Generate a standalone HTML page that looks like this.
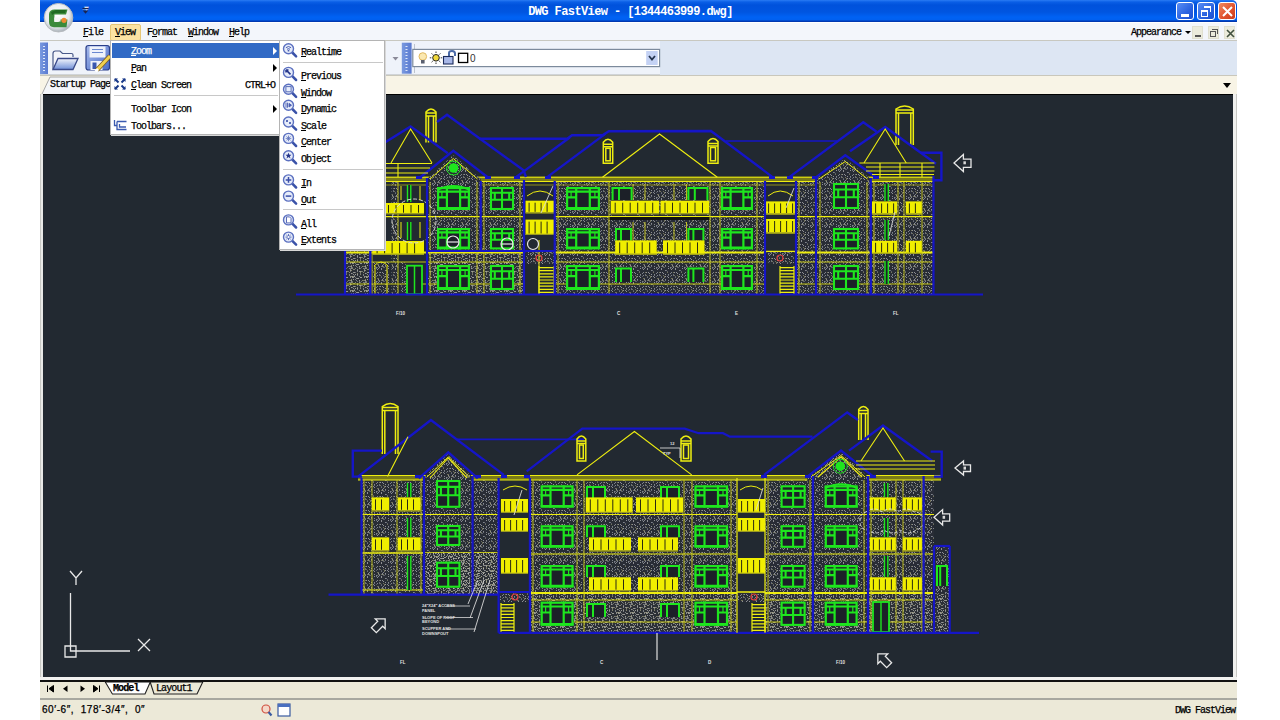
<!DOCTYPE html>
<html><head><meta charset="utf-8">
<style>
*{margin:0;padding:0;box-sizing:border-box}
html,body{width:1280px;height:720px;overflow:hidden;background:#fff;font-family:"Liberation Mono",monospace;position:relative}
.abs{position:absolute}
#title{left:40px;top:0;width:1197px;height:22px;background:linear-gradient(#2a7cf4 0px,#0a5fe6 2px,#0052dc 5px,#0055e0 12px,#0062f4 17px,#0060f0 20px,#0038b0 21px,#0038b0 22px);border-radius:0 5px 0 0}
#title .t{left:0;width:100%;top:5px;text-align:center;color:#fff;font-weight:bold;font-size:12px;letter-spacing:-0.6px;padding-right:16px;line-height:14px}
.tbtn{position:absolute;top:2px;width:18px;height:18px;border:1px solid #fff;border-radius:3px;background:linear-gradient(135deg,#5a8ef5,#2a62e0 60%,#1d4fd0)}
#menubar{left:40px;top:22px;width:1197px;height:19px;background:#f3f6fb;border-top:1px solid #fff;border-bottom:1px solid #c8c8c0}
.mi{position:absolute;top:4px;font-size:10px;letter-spacing:-1px;color:#000;line-height:12px;-webkit-text-stroke:0.25px #000}
u{text-decoration:underline}
#toolbar{left:40px;top:41px;width:1197px;height:34px;background:#dde6f3}
#tb1{left:0;top:0px;width:620px;height:34px;background:#eff3fa;border-bottom:1px solid #d0d4d8}
#tabrow{left:40px;top:75px;width:1197px;height:19px;background:#f8f4e6;border-top:1px solid #c9c7bb}
#canvas{left:43px;top:94px;width:1190px;height:583px;background:#222931;border-top:1px solid #000;overflow:hidden}
#rb{left:1233px;top:94px;width:4px;height:586px;background:#f0f0ee;border-right:1px solid #c8c8c4}
#lb{left:40px;top:94px;width:3px;height:586px;background:#e8e8e6;border-left:1px solid #c8c8c4}
#cbot{left:40px;top:677px;width:1197px;height:4px;background:#f2f2f0}
#tabbar{left:40px;top:680px;width:1197px;height:20px;background:#ece9d8;border-top:2px solid #111;border-bottom:2px solid #a8a8a0}
#status{left:40px;top:700px;width:1197px;height:20px;background:#ece9d8}
.menu{background:#fff;border:1px solid #b4b4b4;box-shadow:1px 1px 0 #d8d8d8}
.row{position:absolute;font-size:10px;letter-spacing:-1px;color:#000;line-height:12px;-webkit-text-stroke:0.25px currentColor}
.sep{position:absolute;height:2px;background:#c8c8c8;border-bottom:1px solid #fff}
.menu .row{margin-top:1px}
.arr{position:absolute;width:0;height:0;border-top:4px solid transparent;border-bottom:4px solid transparent;border-left:4px solid #000}
</style></head><body>
<!-- title bar -->
<div id="title" class="abs">
  <div class="abs t">DWG FastView - [1344463999.dwg]</div>
  <div class="tbtn" style="left:1136px"><div class="abs" style="left:4px;top:11px;width:8px;height:3px;background:#fff"></div></div>
  <div class="tbtn" style="left:1157px"><div class="abs" style="left:3px;top:7px;width:7px;height:7px;border:1px solid #fff;border-top-width:2px"></div><div class="abs" style="left:6px;top:3px;width:7px;height:6px;border-top:2px solid #fff;border-right:1px solid #fff"></div></div>
  <div class="tbtn" style="left:1178px;background:linear-gradient(135deg,#f08a60,#e0502a 60%,#c83c1c)"><svg class="abs" style="left:3px;top:3px" width="11" height="11"><path d="M1 1L10 10M10 1L1 10" stroke="#fff" stroke-width="2"/></svg></div>
  <div class="abs" style="left:44px;top:4px;color:#fff;font-size:8px">&#9660;</div>
</div>
<!-- menubar -->
<div id="menubar" class="abs">
  <div class="abs" style="left:70px;top:1px;width:31px;height:17px;background:#fbe2a2;border:1px solid #e6c676;border-radius:2px"></div>
  <div class="mi" style="left:43px"><u>F</u>ile</div>
  <div class="mi" style="left:75px"><u>V</u>iew</div>
  <div class="mi" style="left:107px">F<u>o</u>rmat</div>
  <div class="mi" style="left:148px"><u>W</u>indow</div>
  <div class="mi" style="left:189px"><u>H</u>elp</div>
  <div class="mi" style="left:1091px">Appearance</div>
  <div class="abs" style="left:1145px;top:8px;width:0;height:0;border-left:3px solid transparent;border-right:3px solid transparent;border-top:3px solid #000"></div>
  <div class="abs" style="left:1152px;top:3px;width:11px;height:13px;background:#ebebdc;border:1px solid #e0e0d0"><div class="abs" style="left:2px;top:8px;width:6px;height:2px;background:#555"></div></div>
  <div class="abs" style="left:1168px;top:3px;width:11px;height:13px;background:#ebebdc;border:1px solid #e0e0d0"><div class="abs" style="left:1px;top:4px;width:6px;height:6px;border:1px solid #555"></div><div class="abs" style="left:3px;top:2px;width:6px;height:5px;border-top:1px solid #555;border-right:1px solid #555"></div></div>
  <div class="abs" style="left:1184px;top:3px;width:11px;height:13px;background:#ebebdc;border:1px solid #e0e0d0"><svg class="abs" style="left:1px;top:2px" width="9" height="9"><path d="M1 1L8 8M8 1L1 8" stroke="#405040" stroke-width="1.6"/></svg></div>
</div>
<!-- toolbar -->
<div id="toolbar" class="abs">
  <div id="tb1" class="abs"></div>
</div>
<!-- tab row -->
<div id="tabrow" class="abs">
  <svg class="abs" style="left:0;top:0" width="90" height="19"><path d="M2 18L10 1H88V18" fill="#f4f6f9" stroke="#a8a8a8" stroke-width="1"/></svg>
  <div class="row" style="left:10px;top:3px">Startup Page</div>
  <div class="abs" style="left:1183px;top:7px;width:0;height:0;border-left:4px solid transparent;border-right:4px solid transparent;border-top:5px solid #000"></div>
</div>
<div id="lb" class="abs"></div>
<div id="rb" class="abs"></div>
<div id="canvas" class="abs"></div>
<svg class="abs" style="left:0;top:0" width="1280" height="720" viewBox="0 0 1280 720" shape-rendering="auto">
<defs>
<pattern id="st" width="14" height="14" patternUnits="userSpaceOnUse"><rect width="14" height="14" fill="#282c35"/><rect x="7" y="13" width="1" height="1" fill="#8e9094"/><rect x="13" y="12" width="1" height="1" fill="#70705a"/><rect x="7" y="8" width="1" height="1" fill="#8e9094"/><rect x="3" y="2" width="1" height="1" fill="#8e9094"/><rect x="7" y="10" width="1" height="1" fill="#8e9094"/><rect x="12" y="2" width="1" height="1" fill="#6a6f78"/><rect x="7" y="4" width="1" height="1" fill="#80848c"/><rect x="1" y="8" width="1" height="1" fill="#6a6f78"/><rect x="9" y="6" width="1" height="1" fill="#70705a"/><rect x="10" y="11" width="1" height="1" fill="#8e9094"/><rect x="10" y="2" width="1" height="1" fill="#8e9094"/><rect x="0" y="13" width="1" height="1" fill="#8e9094"/><rect x="1" y="0" width="1" height="1" fill="#6a6f78"/><rect x="3" y="3" width="1" height="1" fill="#8e9094"/><rect x="0" y="12" width="1" height="1" fill="#70705a"/><rect x="5" y="7" width="1" height="1" fill="#8e9094"/><rect x="13" y="3" width="1" height="1" fill="#8e9094"/><rect x="3" y="10" width="1" height="1" fill="#5a5e66"/><rect x="7" y="0" width="1" height="1" fill="#6a6f78"/><rect x="4" y="6" width="1" height="1" fill="#8e9094"/><rect x="13" y="1" width="1" height="1" fill="#5a5e66"/><rect x="5" y="12" width="1" height="1" fill="#80848c"/><rect x="8" y="4" width="1" height="1" fill="#6a6f78"/><rect x="1" y="9" width="1" height="1" fill="#6a6f78"/><rect x="6" y="1" width="1" height="1" fill="#5a5e66"/><rect x="10" y="0" width="1" height="1" fill="#80848c"/><rect x="3" y="0" width="1" height="1" fill="#70705a"/><rect x="6" y="11" width="1" height="1" fill="#70705a"/><rect x="9" y="10" width="1" height="1" fill="#80848c"/><rect x="12" y="10" width="1" height="1" fill="#5a5e66"/><rect x="5" y="1" width="1" height="1" fill="#5a5e66"/><rect x="5" y="0" width="1" height="1" fill="#70705a"/><rect x="12" y="1" width="1" height="1" fill="#80848c"/><rect x="3" y="11" width="1" height="1" fill="#6a6f78"/><rect x="0" y="0" width="1" height="1" fill="#70705a"/><rect x="12" y="7" width="1" height="1" fill="#80848c"/><rect x="10" y="8" width="1" height="1" fill="#80848c"/><rect x="6" y="10" width="1" height="1" fill="#70705a"/><rect x="1" y="6" width="1" height="1" fill="#70705a"/><rect x="4" y="13" width="1" height="1" fill="#8e9094"/><rect x="4" y="0" width="1" height="1" fill="#80848c"/><rect x="2" y="6" width="1" height="1" fill="#8e9094"/><rect x="10" y="9" width="1" height="1" fill="#6a6f78"/><rect x="0" y="2" width="1" height="1" fill="#80848c"/><rect x="9" y="5" width="1" height="1" fill="#5a5e66"/><rect x="1" y="1" width="1" height="1" fill="#80848c"/><rect x="5" y="9" width="1" height="1" fill="#70705a"/><rect x="2" y="9" width="1" height="1" fill="#70705a"/><rect x="13" y="9" width="1" height="1" fill="#80848c"/><rect x="13" y="6" width="1" height="1" fill="#80848c"/></pattern>
<pattern id="st2" width="14" height="14" patternUnits="userSpaceOnUse"><rect width="14" height="14" fill="#2c3036"/><rect x="10" y="2" width="1" height="1" fill="#6a6e70"/><rect x="3" y="13" width="1" height="1" fill="#9a9a96"/><rect x="3" y="11" width="1" height="1" fill="#8a8c8a"/><rect x="2" y="11" width="1" height="1" fill="#9a9a96"/><rect x="3" y="10" width="1" height="1" fill="#84846a"/><rect x="7" y="9" width="1" height="1" fill="#7a7e84"/><rect x="6" y="0" width="1" height="1" fill="#7a7e84"/><rect x="1" y="0" width="1" height="1" fill="#9a9a96"/><rect x="4" y="3" width="1" height="1" fill="#84846a"/><rect x="4" y="6" width="1" height="1" fill="#9a9a96"/><rect x="7" y="4" width="1" height="1" fill="#9a9a96"/><rect x="1" y="2" width="1" height="1" fill="#8a8c8a"/><rect x="7" y="8" width="1" height="1" fill="#9a9a96"/><rect x="9" y="1" width="1" height="1" fill="#6a6e70"/><rect x="3" y="3" width="1" height="1" fill="#7a7e84"/><rect x="1" y="4" width="1" height="1" fill="#84846a"/><rect x="7" y="3" width="1" height="1" fill="#7a7e84"/><rect x="0" y="2" width="1" height="1" fill="#6a6e70"/><rect x="5" y="8" width="1" height="1" fill="#9a9a96"/><rect x="2" y="1" width="1" height="1" fill="#6a6e70"/><rect x="2" y="7" width="1" height="1" fill="#6a6e70"/><rect x="10" y="11" width="1" height="1" fill="#9a9a96"/><rect x="9" y="2" width="1" height="1" fill="#9a9a96"/><rect x="0" y="0" width="1" height="1" fill="#84846a"/><rect x="5" y="11" width="1" height="1" fill="#6a6e70"/><rect x="9" y="10" width="1" height="1" fill="#7a7e84"/><rect x="7" y="1" width="1" height="1" fill="#6a6e70"/><rect x="5" y="2" width="1" height="1" fill="#7a7e84"/><rect x="1" y="7" width="1" height="1" fill="#9a9a96"/><rect x="0" y="11" width="1" height="1" fill="#8a8c8a"/><rect x="12" y="5" width="1" height="1" fill="#6a6e70"/><rect x="1" y="10" width="1" height="1" fill="#84846a"/><rect x="1" y="13" width="1" height="1" fill="#84846a"/><rect x="12" y="0" width="1" height="1" fill="#84846a"/><rect x="9" y="0" width="1" height="1" fill="#9a9a96"/><rect x="10" y="6" width="1" height="1" fill="#84846a"/><rect x="1" y="1" width="1" height="1" fill="#7a7e84"/><rect x="11" y="5" width="1" height="1" fill="#84846a"/><rect x="11" y="11" width="1" height="1" fill="#9a9a96"/><rect x="7" y="7" width="1" height="1" fill="#84846a"/><rect x="13" y="8" width="1" height="1" fill="#7a7e84"/><rect x="8" y="12" width="1" height="1" fill="#9a9a96"/><rect x="0" y="4" width="1" height="1" fill="#9a9a96"/><rect x="0" y="3" width="1" height="1" fill="#7a7e84"/><rect x="7" y="12" width="1" height="1" fill="#9a9a96"/><rect x="10" y="7" width="1" height="1" fill="#6a6e70"/><rect x="0" y="5" width="1" height="1" fill="#6a6e70"/><rect x="2" y="10" width="1" height="1" fill="#9a9a96"/><rect x="3" y="8" width="1" height="1" fill="#8a8c8a"/><rect x="5" y="6" width="1" height="1" fill="#6a6e70"/><rect x="6" y="12" width="1" height="1" fill="#8a8c8a"/><rect x="3" y="6" width="1" height="1" fill="#8a8c8a"/><rect x="9" y="5" width="1" height="1" fill="#8a8c8a"/><rect x="2" y="2" width="1" height="1" fill="#84846a"/><rect x="5" y="13" width="1" height="1" fill="#7a7e84"/><rect x="11" y="1" width="1" height="1" fill="#6a6e70"/><rect x="13" y="2" width="1" height="1" fill="#7a7e84"/><rect x="13" y="6" width="1" height="1" fill="#84846a"/><rect x="10" y="8" width="1" height="1" fill="#84846a"/><rect x="10" y="5" width="1" height="1" fill="#9a9a96"/><rect x="7" y="5" width="1" height="1" fill="#7a7e84"/><rect x="13" y="0" width="1" height="1" fill="#6a6e70"/><rect x="13" y="9" width="1" height="1" fill="#7a7e84"/><rect x="4" y="9" width="1" height="1" fill="#6a6e70"/><rect x="4" y="10" width="1" height="1" fill="#9a9a96"/><rect x="0" y="10" width="1" height="1" fill="#8a8c8a"/></pattern>
<pattern id="st3" width="5" height="5" patternUnits="userSpaceOnUse"><rect x="1" y="1" width="1" height="1" fill="#a0a090"/><rect x="3" y="3" width="1" height="1" fill="#b8b8b0"/><rect x="4" y="0" width="1" height="1" fill="#909090"/></pattern>
</defs>
<g>
<rect x="345" y="180" width="25" height="114.5" fill="url(#st)" stroke="none" stroke-width="1"/>
<rect x="427" y="180" width="97" height="114.5" fill="url(#st)" stroke="none" stroke-width="1"/>
<rect x="391.5" y="180" width="7" height="114.5" fill="url(#st)" stroke="none" stroke-width="1"/>
<rect x="372" y="262" width="18" height="32" fill="url(#st)" stroke="none" stroke-width="1"/>
<rect x="400" y="262" width="6" height="32" fill="url(#st)" stroke="none" stroke-width="1"/>
<rect x="345" y="252" width="25" height="42.5" fill="url(#st2)" stroke="none" stroke-width="1"/>
<rect x="427" y="252" width="97" height="42.5" fill="url(#st2)" stroke="none" stroke-width="1"/>
<rect x="555" y="252" width="210" height="42.5" fill="url(#st2)" stroke="none" stroke-width="1"/>
<rect x="795" y="252" width="139" height="42.5" fill="url(#st2)" stroke="none" stroke-width="1"/>
<rect x="555" y="180" width="210" height="114.5" fill="url(#st)" stroke="none" stroke-width="1"/>
<rect x="795" y="178" width="139" height="116.5" fill="url(#st)" stroke="none" stroke-width="1"/>
<rect x="524" y="182" width="31" height="112.5" fill="#222931" stroke="none" stroke-width="1"/>
<rect x="765" y="182" width="30" height="112.5" fill="#222931" stroke="none" stroke-width="1"/>
<path d="M527 196 Q540 186 553 196" stroke="#eeee10" stroke-width="1" fill="none"/>
<path d="M768 196 Q780 186 793 196" stroke="#eeee10" stroke-width="1" fill="none"/>
<rect x="525.5" y="200.7" width="28.5" height="12.6" fill="#f0ee00" stroke="none" stroke-width="1"/>
<path d="M529.1 202.7V211.8M535.1 202.7V211.8M541.1 202.7V211.8M547.1 202.7V211.8" stroke="#2a2a10" stroke-width="1"/>
<rect x="525.5" y="212.1" width="28.5" height="1.2" fill="#9a9a20" stroke="none" stroke-width="1"/>
<rect x="525.5" y="219.6" width="28.5" height="15.4" fill="#f0ee00" stroke="none" stroke-width="1"/>
<path d="M529.1 221.6V233.5M535.1 221.6V233.5M541.1 221.6V233.5M547.1 221.6V233.5" stroke="#2a2a10" stroke-width="1"/>
<rect x="525.5" y="233.8" width="28.5" height="1.2" fill="#9a9a20" stroke="none" stroke-width="1"/>
<path d="M524 251.5H555" stroke="#1515c8" stroke-width="2"/>
<rect x="526" y="252" width="28" height="12" fill="url(#st)" stroke="none" stroke-width="1"/>
<path d="M539 267.6H554M539 270.7H554M539 273.8H554M539 276.9H554M539 280H554M539 283.1H554M539 286.2H554M539 289.3H554M539 292.4H554" stroke="#eeee10" stroke-width="1.2"/>
<path d="M539 266V294 M554 266V294" stroke="#eeee10" stroke-width="1.2"/>
<path d="M539 240V294" stroke="#eeee10" stroke-width="1"/>
<rect x="765" y="201.4" width="30" height="13.1" fill="#f0ee00" stroke="none" stroke-width="1"/>
<path d="M768.6 203.4V213M774.6 203.4V213M780.6 203.4V213M786.6 203.4V213M792.6 203.4V213" stroke="#2a2a10" stroke-width="1"/>
<rect x="765" y="213.3" width="30" height="1.2" fill="#9a9a20" stroke="none" stroke-width="1"/>
<rect x="765" y="219" width="30" height="14.5" fill="#f0ee00" stroke="none" stroke-width="1"/>
<path d="M768.6 221V232M774.6 221V232M780.6 221V232M786.6 221V232M792.6 221V232" stroke="#2a2a10" stroke-width="1"/>
<rect x="765" y="232.3" width="30" height="1.2" fill="#9a9a20" stroke="none" stroke-width="1"/>
<path d="M765 251.5H795" stroke="#eeee10" stroke-width="1.5"/>
<rect x="767" y="252" width="27" height="12" fill="url(#st)" stroke="none" stroke-width="1"/>
<path d="M780 267.6H794M780 270.7H794M780 273.8H794M780 276.9H794M780 280H794M780 283.1H794M780 286.2H794M780 289.3H794M780 292.4H794" stroke="#eeee10" stroke-width="1.2"/>
<path d="M780 266V294 M794 266V294" stroke="#eeee10" stroke-width="1.2"/>
<circle cx="539" cy="258" r="3" fill="none" stroke="#e04040" stroke-width="1.2"/>
<circle cx="780" cy="258" r="3" fill="none" stroke="#e04040" stroke-width="1.2"/>
<path d="M345 216.6H524" stroke="#eeee10" stroke-width="1.2"/>
<path d="M345 252.5H524" stroke="#eeee10" stroke-width="2.2"/>
<path d="M345 262H524" stroke="#eeee10" stroke-width="0.8"/>
<path d="M345 284H524" stroke="#eeee10" stroke-width="0.8"/>
<path d="M555 216.6H765" stroke="#eeee10" stroke-width="1.2"/>
<path d="M555 252.5H765" stroke="#eeee10" stroke-width="2.2"/>
<path d="M555 262H765" stroke="#eeee10" stroke-width="0.8"/>
<path d="M555 284H765" stroke="#eeee10" stroke-width="0.8"/>
<path d="M795 216.6H934" stroke="#eeee10" stroke-width="1.2"/>
<path d="M795 252.5H934" stroke="#eeee10" stroke-width="2.2"/>
<path d="M795 262H934" stroke="#eeee10" stroke-width="0.8"/>
<path d="M795 284H934" stroke="#eeee10" stroke-width="0.8"/>
<path d="M609 218.5H710" stroke="#111" stroke-width="3"/>
<rect x="345" y="176.6" width="589" height="5.4" fill="#7a7a18" stroke="none" stroke-width="1"/>
<path d="M345 177.2H934" stroke="#eeee10" stroke-width="1.1"/>
<path d="M345 181.5H934" stroke="#eeee10" stroke-width="1.1"/>
<path d="M345 185H934" stroke="#a8a818" stroke-width="0.8"/>
<path d="M427 186 L427 179 L453.3 155 L480.7 179 L480.7 186Z" fill="url(#st)" stroke="none" stroke-width="1"/>
<path d="M816 186 L816 179 L845.3 158.5 L870.8 179 L870.8 186Z" fill="url(#st)" stroke="none" stroke-width="1"/>
<path d="M430 179 L453.3 158.5 L477.5 179 M819 179 L845.3 161.5 L867.5 179" stroke="#eeee10" stroke-width="1" fill="none"/>
<path d="M372 182V294.5" stroke="#c8c818" stroke-width="0.9"/>
<path d="M398 182V294.5" stroke="#c8c818" stroke-width="0.9"/>
<path d="M430 182V294.5" stroke="#c8c818" stroke-width="0.9"/>
<path d="M477 182V294.5" stroke="#c8c818" stroke-width="0.9"/>
<path d="M484 182V294.5" stroke="#c8c818" stroke-width="0.9"/>
<path d="M520 182V294.5" stroke="#c8c818" stroke-width="0.9"/>
<path d="M558 182V294.5" stroke="#c8c818" stroke-width="0.9"/>
<path d="M609 182V294.5" stroke="#c8c818" stroke-width="0.9"/>
<path d="M710 182V294.5" stroke="#c8c818" stroke-width="0.9"/>
<path d="M720 182V294.5" stroke="#c8c818" stroke-width="0.9"/>
<path d="M757 182V294.5" stroke="#c8c818" stroke-width="0.9"/>
<path d="M799 182V294.5" stroke="#c8c818" stroke-width="0.9"/>
<path d="M820 182V294.5" stroke="#c8c818" stroke-width="0.9"/>
<path d="M867 182V294.5" stroke="#c8c818" stroke-width="0.9"/>
<path d="M874 182V294.5" stroke="#c8c818" stroke-width="0.9"/>
<path d="M898 182V294.5" stroke="#c8c818" stroke-width="0.9"/>
<path d="M904 182V294.5" stroke="#c8c818" stroke-width="0.9"/>
<path d="M922 182V294.5" stroke="#c8c818" stroke-width="0.9"/>
<path d="M633 184V200" stroke="#c8c818" stroke-width="0.9"/>
<path d="M633 222V240" stroke="#c8c818" stroke-width="0.9"/>
<path d="M645 184V200" stroke="#c8c818" stroke-width="0.9"/>
<path d="M645 222V240" stroke="#c8c818" stroke-width="0.9"/>
<path d="M674 184V200" stroke="#c8c818" stroke-width="0.9"/>
<path d="M674 222V240" stroke="#c8c818" stroke-width="0.9"/>
<path d="M686.5 184V200" stroke="#c8c818" stroke-width="0.9"/>
<path d="M686.5 222V240" stroke="#c8c818" stroke-width="0.9"/>
<rect x="437" y="187" width="33" height="23" fill="#1c2028" stroke="none" stroke-width="1"/>
<g stroke="#1ee61e" stroke-width="2.2" fill="none">
<rect x="438.1" y="188.1" width="30.8" height="20.8"/>
<path d="M446.9 187V210 M460.1 187V210 M437 191.6H470 M437 208.2H470 M437 197.3H446.9 M460.1 197.3H470"/>
<path d="M441.9 191.6V197.3 M465.1 191.6V197.3" stroke-width="1.2"/>
<path d="M437 190 Q453.5 182 470 190" stroke-width="2"/>
</g>
<rect x="490" y="187" width="24" height="23" fill="#1c2028" stroke="none" stroke-width="1"/>
<g stroke="#1ee61e" stroke-width="2.1" fill="none">
<rect x="491" y="188" width="22" height="21"/>
<path d="M502 187V210 M490 192.8H514 M490 199.7H514 M494.8 192.8V199.7 M509.2 192.8V199.7"/>
</g>
<rect x="566" y="187" width="34" height="23" fill="#1c2028" stroke="none" stroke-width="1"/>
<g stroke="#1ee61e" stroke-width="2.2" fill="none">
<rect x="567.1" y="188.1" width="31.8" height="20.8"/>
<path d="M576.2 187V210 M589.8 187V210 M566 191.6H600 M566 208.2H600 M566 197.3H576.2 M589.8 197.3H600"/>
<path d="M571.1 191.6V197.3 M594.9 191.6V197.3" stroke-width="1.2"/>
</g>
<rect x="721" y="187" width="32" height="23" fill="#1c2028" stroke="none" stroke-width="1"/>
<g stroke="#1ee61e" stroke-width="2.2" fill="none">
<rect x="722.1" y="188.1" width="29.8" height="20.8"/>
<path d="M730.6 187V210 M743.4 187V210 M721 191.6H753 M721 208.2H753 M721 197.3H730.6 M743.4 197.3H753"/>
<path d="M725.8 191.6V197.3 M748.2 191.6V197.3" stroke-width="1.2"/>
</g>
<rect x="833" y="183" width="26" height="26" fill="#1c2028" stroke="none" stroke-width="1"/>
<g stroke="#1ee61e" stroke-width="2.1" fill="none">
<rect x="834" y="184" width="24" height="24"/>
<path d="M846 183V209 M833 189.5H859 M833 197.3H859 M838.2 189.5V197.3 M853.8 189.5V197.3"/>
</g>
<rect x="437" y="228" width="33" height="21.4" fill="#1c2028" stroke="none" stroke-width="1"/>
<g stroke="#1ee61e" stroke-width="2.2" fill="none">
<rect x="438.1" y="229.1" width="30.8" height="19.2"/>
<path d="M446.9 228V249.4 M460.1 228V249.4 M437 232.3H470 M437 247.7H470 M437 237.6H446.9 M460.1 237.6H470"/>
<path d="M441.9 232.3V237.6 M465.1 232.3V237.6" stroke-width="1.2"/>
</g>
<rect x="490" y="228" width="24" height="21.4" fill="#1c2028" stroke="none" stroke-width="1"/>
<g stroke="#1ee61e" stroke-width="2.1" fill="none">
<rect x="491" y="229" width="22" height="19.4"/>
<path d="M502 228V249.4 M490 233.3H514 M490 239.8H514 M494.8 233.3V239.8 M509.2 233.3V239.8"/>
</g>
<rect x="566" y="228" width="34" height="21.4" fill="#1c2028" stroke="none" stroke-width="1"/>
<g stroke="#1ee61e" stroke-width="2.2" fill="none">
<rect x="567.1" y="229.1" width="31.8" height="19.2"/>
<path d="M576.2 228V249.4 M589.8 228V249.4 M566 232.3H600 M566 247.7H600 M566 237.6H576.2 M589.8 237.6H600"/>
<path d="M571.1 232.3V237.6 M594.9 232.3V237.6" stroke-width="1.2"/>
</g>
<rect x="721" y="228" width="32" height="21.4" fill="#1c2028" stroke="none" stroke-width="1"/>
<g stroke="#1ee61e" stroke-width="2.2" fill="none">
<rect x="722.1" y="229.1" width="29.8" height="19.2"/>
<path d="M730.6 228V249.4 M743.4 228V249.4 M721 232.3H753 M721 247.7H753 M721 237.6H730.6 M743.4 237.6H753"/>
<path d="M725.8 232.3V237.6 M748.2 232.3V237.6" stroke-width="1.2"/>
</g>
<rect x="833" y="228" width="26" height="21.4" fill="#1c2028" stroke="none" stroke-width="1"/>
<g stroke="#1ee61e" stroke-width="2.1" fill="none">
<rect x="834" y="229" width="24" height="19.4"/>
<path d="M846 228V249.4 M833 233.3H859 M833 239.8H859 M838.2 233.3V239.8 M853.8 233.3V239.8"/>
</g>
<rect x="437" y="265" width="33" height="25" fill="#1c2028" stroke="none" stroke-width="1"/>
<g stroke="#1ee61e" stroke-width="2.2" fill="none">
<rect x="438.1" y="266.1" width="30.8" height="22.8"/>
<path d="M446.9 265V290 M460.1 265V290 M437 270H470 M437 288H470 M437 276.2H446.9 M460.1 276.2H470"/>
<path d="M441.9 270V276.2 M465.1 270V276.2" stroke-width="1.2"/>
</g>
<rect x="490" y="265" width="24" height="25" fill="#1c2028" stroke="none" stroke-width="1"/>
<g stroke="#1ee61e" stroke-width="2.1" fill="none">
<rect x="491" y="266" width="22" height="23"/>
<path d="M502 265V290 M490 271.2H514 M490 278.8H514 M494.8 271.2V278.8 M509.2 271.2V278.8"/>
</g>
<rect x="566" y="265" width="34" height="25" fill="#1c2028" stroke="none" stroke-width="1"/>
<g stroke="#1ee61e" stroke-width="2.2" fill="none">
<rect x="567.1" y="266.1" width="31.8" height="22.8"/>
<path d="M576.2 265V290 M589.8 265V290 M566 270H600 M566 288H600 M566 276.2H576.2 M589.8 276.2H600"/>
<path d="M571.1 270V276.2 M594.9 270V276.2" stroke-width="1.2"/>
</g>
<rect x="721" y="265" width="32" height="25" fill="#1c2028" stroke="none" stroke-width="1"/>
<g stroke="#1ee61e" stroke-width="2.2" fill="none">
<rect x="722.1" y="266.1" width="29.8" height="22.8"/>
<path d="M730.6 265V290 M743.4 265V290 M721 270H753 M721 288H753 M721 276.2H730.6 M743.4 276.2H753"/>
<path d="M725.8 270V276.2 M748.2 270V276.2" stroke-width="1.2"/>
</g>
<rect x="833" y="265" width="26" height="25" fill="#1c2028" stroke="none" stroke-width="1"/>
<g stroke="#1ee61e" stroke-width="2.1" fill="none">
<rect x="834" y="266" width="24" height="23"/>
<path d="M846 265V290 M833 271.2H859 M833 278.8H859 M838.2 271.2V278.8 M853.8 271.2V278.8"/>
</g>
<rect x="611.6" y="187" width="21" height="13" fill="#1c2028" stroke="none" stroke-width="1"/>
<g stroke="#1ee61e" stroke-width="2" fill="none">
<path d="M612.6 200V188H631.6V200 M619 188V200"/>
</g>
<rect x="687.4" y="187" width="21" height="13" fill="#1c2028" stroke="none" stroke-width="1"/>
<g stroke="#1ee61e" stroke-width="2" fill="none">
<path d="M688.4 200V188H707.4V200 M694.8 188V200"/>
</g>
<rect x="615" y="228" width="17" height="12.4" fill="#1c2028" stroke="none" stroke-width="1"/>
<g stroke="#1ee61e" stroke-width="2" fill="none">
<path d="M616 240.4V229H631V240.4 M621 229V240.4"/>
</g>
<rect x="687.4" y="228" width="17" height="12.4" fill="#1c2028" stroke="none" stroke-width="1"/>
<g stroke="#1ee61e" stroke-width="2" fill="none">
<path d="M688.4 240.4V229H703.4V240.4 M693.4 229V240.4"/>
</g>
<rect x="615" y="267.5" width="17" height="14.5" fill="#1c2028" stroke="none" stroke-width="1"/>
<g stroke="#1ee61e" stroke-width="2" fill="none">
<path d="M616 282V268.5H631V282 M621 268.5V282"/>
</g>
<rect x="687.4" y="267.5" width="17" height="14.5" fill="#1c2028" stroke="none" stroke-width="1"/>
<g stroke="#1ee61e" stroke-width="2" fill="none">
<path d="M688.4 282V268.5H703.4V282 M693.4 268.5V282"/>
</g>
<rect x="610.7" y="200.7" width="48.5" height="13.5" fill="#f0ee00" stroke="none" stroke-width="1"/>
<path d="M615.2 202.7V212.7M622.7 202.7V212.7M630.2 202.7V212.7M637.7 202.7V212.7M645.2 202.7V212.7M652.7 202.7V212.7" stroke="#2a2a10" stroke-width="1"/>
<rect x="610.7" y="213" width="48.5" height="1.2" fill="#9a9a20" stroke="none" stroke-width="1"/>
<rect x="660.5" y="200.7" width="48.5" height="13.5" fill="#f0ee00" stroke="none" stroke-width="1"/>
<path d="M665 202.7V212.7M672.5 202.7V212.7M680 202.7V212.7M687.5 202.7V212.7M695 202.7V212.7M702.5 202.7V212.7" stroke="#2a2a10" stroke-width="1"/>
<rect x="660.5" y="213" width="48.5" height="1.2" fill="#9a9a20" stroke="none" stroke-width="1"/>
<rect x="615.2" y="240.4" width="41.5" height="14.4" fill="#f0ee00" stroke="none" stroke-width="1"/>
<path d="M619.7 242.4V253.3M627.2 242.4V253.3M634.7 242.4V253.3M642.2 242.4V253.3M649.7 242.4V253.3" stroke="#2a2a10" stroke-width="1"/>
<rect x="615.2" y="253.6" width="41.5" height="1.2" fill="#9a9a20" stroke="none" stroke-width="1"/>
<rect x="663" y="240.4" width="41.5" height="14.4" fill="#f0ee00" stroke="none" stroke-width="1"/>
<path d="M667.5 242.4V253.3M675 242.4V253.3M682.5 242.4V253.3M690 242.4V253.3M697.5 242.4V253.3" stroke="#2a2a10" stroke-width="1"/>
<rect x="663" y="253.6" width="41.5" height="1.2" fill="#9a9a20" stroke="none" stroke-width="1"/>
<rect x="384" y="203" width="40" height="11.2" fill="#f0ee00" stroke="none" stroke-width="1"/>
<path d="M388.5 205V212.7M396 205V212.7M403.5 205V212.7M411 205V212.7M418.5 205V212.7" stroke="#2a2a10" stroke-width="1"/>
<rect x="384" y="213" width="40" height="1.2" fill="#9a9a20" stroke="none" stroke-width="1"/>
<rect x="372.6" y="241" width="51.4" height="13.8" fill="#f0ee00" stroke="none" stroke-width="1"/>
<path d="M377.1 243V253.3M384.6 243V253.3M392.1 243V253.3M399.6 243V253.3M407.1 243V253.3M414.6 243V253.3" stroke="#2a2a10" stroke-width="1"/>
<rect x="372.6" y="253.6" width="51.4" height="1.2" fill="#9a9a20" stroke="none" stroke-width="1"/>
<rect x="872" y="201.4" width="25" height="13.1" fill="#f0ee00" stroke="none" stroke-width="1"/>
<path d="M875.6 203.4V213M881.6 203.4V213M887.6 203.4V213M893.6 203.4V213" stroke="#2a2a10" stroke-width="1"/>
<rect x="872" y="213.3" width="25" height="1.2" fill="#9a9a20" stroke="none" stroke-width="1"/>
<rect x="905.8" y="201.4" width="16" height="13.1" fill="#f0ee00" stroke="none" stroke-width="1"/>
<path d="M909.4 203.4V213M915.4 203.4V213" stroke="#2a2a10" stroke-width="1"/>
<rect x="905.8" y="213.3" width="16" height="1.2" fill="#9a9a20" stroke="none" stroke-width="1"/>
<rect x="872" y="240.8" width="25" height="13.1" fill="#f0ee00" stroke="none" stroke-width="1"/>
<path d="M875.6 242.8V252.4M881.6 242.8V252.4M887.6 242.8V252.4M893.6 242.8V252.4" stroke="#2a2a10" stroke-width="1"/>
<rect x="872" y="252.7" width="25" height="1.2" fill="#9a9a20" stroke="none" stroke-width="1"/>
<rect x="905.8" y="240.8" width="16" height="13.1" fill="#f0ee00" stroke="none" stroke-width="1"/>
<path d="M909.4 242.8V252.4M915.4 242.8V252.4" stroke="#2a2a10" stroke-width="1"/>
<rect x="905.8" y="252.7" width="16" height="1.2" fill="#9a9a20" stroke="none" stroke-width="1"/>
<rect x="407" y="185" width="4.5" height="17" fill="#1c2028" stroke="none" stroke-width="1"/>
<path d="M407.5 185V202" stroke="#1ee61e" stroke-width="1.4"/>
<path d="M410.8 185V202" stroke="#1ee61e" stroke-width="1.4"/>
<rect x="407" y="222" width="4.5" height="18" fill="#1c2028" stroke="none" stroke-width="1"/>
<path d="M407.5 222V240" stroke="#1ee61e" stroke-width="1.4"/>
<path d="M410.8 222V240" stroke="#1ee61e" stroke-width="1.4"/>
<rect x="884.5" y="184" width="4.5" height="17" fill="#1c2028" stroke="none" stroke-width="1"/>
<path d="M885 184V201" stroke="#1ee61e" stroke-width="1.4"/>
<path d="M888.3 184V201" stroke="#1ee61e" stroke-width="1.4"/>
<rect x="884.5" y="220" width="4.5" height="20" fill="#1c2028" stroke="none" stroke-width="1"/>
<path d="M885 220V240" stroke="#1ee61e" stroke-width="1.4"/>
<path d="M888.3 220V240" stroke="#1ee61e" stroke-width="1.4"/>
<rect x="884.5" y="261" width="4.5" height="23" fill="#1c2028" stroke="none" stroke-width="1"/>
<path d="M885 261V284" stroke="#1ee61e" stroke-width="1.4"/>
<path d="M888.3 261V284" stroke="#1ee61e" stroke-width="1.4"/>
<rect x="407" y="265.7" width="15" height="28.5" fill="#1c2028" stroke="#1ee61e" stroke-width="1.8"/>
<path d="M414.5 266V294" stroke="#1ee61e" stroke-width="1.5"/>
<circle cx="414" cy="221" r="22" stroke="#d8d8d8" stroke-width="1" fill="none" stroke-dasharray="4 2"/>
<path d="M374 266 Q381 258 388 266 M375 266V294 M387 266V294 M401 186V200 M420 186V200 M401 222V238 M420 222V238" stroke="#eeee10" stroke-width="1" fill="none"/>
<circle cx="453" cy="242" r="6" stroke="#e8e8e8" stroke-width="1.2" fill="none"/>
<path d="M447 242H459" stroke="#e8e8e8" stroke-width="1.2"/>
<circle cx="507" cy="244" r="6" stroke="#e8e8e8" stroke-width="1.2" fill="none"/>
<path d="M501 244H513" stroke="#e8e8e8" stroke-width="1.2"/>
<circle cx="533" cy="244" r="5.5" stroke="#e8e8e8" stroke-width="1.2" fill="none"/>
<path d="M541 213 L553 186" stroke="#d8d8d8" stroke-width="0.9" fill="none" stroke-linejoin="miter" />
<path d="M786 208 L794 188" stroke="#d8d8d8" stroke-width="0.9" fill="none" stroke-linejoin="miter" />
<path d="M889 236 L895 212" stroke="#d8d8d8" stroke-width="0.9" fill="none" stroke-linejoin="miter" />
<path d="M345 180V294.5" stroke="#1515c8" stroke-width="2.2"/>
<path d="M370.3 250V294.5" stroke="#1515c8" stroke-width="2.2"/>
<path d="M427 178V294.5" stroke="#1515c8" stroke-width="2.2"/>
<path d="M480.7 181V251" stroke="#1515c8" stroke-width="2.2"/>
<path d="M524 180V294.5" stroke="#1515c8" stroke-width="2.2"/>
<path d="M554.7 181V294.5" stroke="#1515c8" stroke-width="2.2"/>
<path d="M765 181V294.5" stroke="#1515c8" stroke-width="2.2"/>
<path d="M796 181V294.5" stroke="#1515c8" stroke-width="2.2"/>
<path d="M816 178V294.5" stroke="#1515c8" stroke-width="2.2"/>
<path d="M870.8 178V294.5" stroke="#1515c8" stroke-width="2.2"/>
<path d="M933.5 176V294.5" stroke="#1515c8" stroke-width="2.2"/>
<path d="M427 251H555" stroke="#1515c8" stroke-width="2.2"/>
<path d="M296 294.5H983" stroke="#1515c8" stroke-width="2.2"/>
<g stroke="#eeee10" stroke-width="1.5" fill="none">
<path d="M426 142.4V112Q431 106 436 112V142.4"/>
<path d="M428.5 142.4V116 M433.5 142.4V116 M426 113H436 M426 116H436"/>
</g>
<g stroke="#eeee10" stroke-width="1.5" fill="none">
<path d="M896 145V109Q904.6 103 913.3 109V145"/>
<path d="M898.5 145V113 M910.8 145V113 M896 110H913.3 M896 113H913.3"/>
</g>
<path d="M360 158 L410.6 126.4 L447.8 153.3" stroke="#1515c8" stroke-width="2.4" fill="none" stroke-linejoin="miter" />
<path d="M437 122 L447 114.8 L523.6 170.3 L526 177" stroke="#1515c8" stroke-width="2.4" fill="none" stroke-linejoin="miter" />
<path d="M419.4 178 L453.3 150.8 L487.7 177.3" stroke="#1515c8" stroke-width="2.4" fill="none" stroke-linejoin="miter" />
<path d="M479 138.8 L567.3 138.8 L572 135.2 L602.5 135.2 L608.8 131.2 L711 131 L772 176.6" stroke="#1515c8" stroke-width="2.4" fill="none" stroke-linejoin="miter" />
<path d="M516.6 176.6 L569.7 137.5" stroke="#1515c8" stroke-width="2.4" fill="none" stroke-linejoin="miter" />
<path d="M547.8 176.6 L605.6 133.6" stroke="#1515c8" stroke-width="2.4" fill="none" stroke-linejoin="miter" />
<path d="M726 141 L837 141" stroke="#1515c8" stroke-width="1.6" fill="none" stroke-linejoin="miter" />
<path d="M790 176.6 L863.3 122.3 L876.6 131.7" stroke="#1515c8" stroke-width="2.4" fill="none" stroke-linejoin="miter" />
<path d="M850 151.2 L885.2 127 L936 163.8" stroke="#1515c8" stroke-width="2.4" fill="none" stroke-linejoin="miter" />
<path d="M920.3 152.8 L941.4 152.8 L941.4 180.2 L932.8 180.2" stroke="#1515c8" stroke-width="2.4" fill="none" stroke-linejoin="miter" />
<path d="M815.6 177.8 L845.3 155.2 L876.6 177.8" stroke="#1515c8" stroke-width="2.4" fill="none" stroke-linejoin="miter" />
<rect x="416" y="176" width="6" height="3" fill="#1515c8" stroke="none" stroke-width="1"/>
<rect x="485" y="176" width="6" height="3" fill="#1515c8" stroke="none" stroke-width="1"/>
<rect x="514" y="176" width="6" height="3" fill="#1515c8" stroke="none" stroke-width="1"/>
<rect x="545" y="176" width="6" height="3" fill="#1515c8" stroke="none" stroke-width="1"/>
<rect x="769" y="176" width="6" height="3" fill="#1515c8" stroke="none" stroke-width="1"/>
<rect x="787" y="176" width="6" height="3" fill="#1515c8" stroke="none" stroke-width="1"/>
<rect x="812" y="176" width="6" height="3" fill="#1515c8" stroke="none" stroke-width="1"/>
<rect x="873" y="176" width="6" height="3" fill="#1515c8" stroke="none" stroke-width="1"/>
<g stroke="#eeee10" stroke-width="1.1" fill="none">
<path d="M391 163 L410.6 129 L432 163 M602.5 177.3 L659.5 134 L717.3 177.3 M864 163 L885.2 129 L906.25 163"/>
<path d="M345 163.5H432 M345 168H430 M345 173H428 M859.4 163H934.4 M866 167H934.4 M866 171H934.4 M872 174.5H934"/>
<path d="M376 163V177 M398 163V177 M880 163V177 M900 163V177 M922 163V177"/>
</g>
<circle cx="453.6" cy="168" r="4.8" fill="#1ee61e"/><circle cx="453.6" cy="168" r="7" fill="none" stroke="#1ee61e" stroke-width="1"/>
<g stroke="#eeee10" stroke-width="1.5" fill="none">
<path d="M603.3 163.3V142.3Q608 136.3 612.7 142.3V163.3Z"/>
<path d="M603.3 144.3H612.7 M603.3 146.8H612.7"/>
<rect x="605.8" y="148.3" width="4.4" height="12.5"/>
</g>
<g stroke="#eeee10" stroke-width="1.5" fill="none">
<path d="M708 163.3V141.5Q713 135.5 718 141.5V163.3Z"/>
<path d="M708 143.5H718 M708 146H718"/>
<rect x="710.5" y="147.5" width="5" height="13.3"/>
</g>
<path d="M954 163 L963.4 154.4 L963.4 159.2 L971 159.2 L971 167.3 L963.4 167.3 L963.4 171.6Z" fill="none" stroke="#e8e8e8" stroke-width="1.3"/>
<rect x="963.4" y="161.3" width="2.5" height="3" fill="#d8d8d8"/>
<text x="396" y="315" fill="#e0e0e0" font-size="4.5" font-family="Liberation Sans" font-weight="bold">F/10</text>
<text x="617" y="315" fill="#e0e0e0" font-size="4.5" font-family="Liberation Sans" font-weight="bold">C</text>
<text x="735" y="315" fill="#e0e0e0" font-size="4.5" font-family="Liberation Sans" font-weight="bold">E</text>
<text x="893" y="315" fill="#e0e0e0" font-size="4.5" font-family="Liberation Sans" font-weight="bold">FL</text>
<rect x="361.5" y="478" width="137" height="116.6" fill="url(#st)" stroke="none" stroke-width="1"/>
<rect x="530" y="478" width="207" height="154.8" fill="url(#st)" stroke="none" stroke-width="1"/>
<rect x="765" y="476" width="169" height="156.8" fill="url(#st)" stroke="none" stroke-width="1"/>
<rect x="934" y="546" width="15.7" height="86.8" fill="url(#st)" stroke="none" stroke-width="1"/>
<rect x="530" y="593" width="207" height="39.8" fill="url(#st2)" stroke="none" stroke-width="1"/>
<rect x="765" y="593" width="184.7" height="39.8" fill="url(#st2)" stroke="none" stroke-width="1"/>
<rect x="498.6" y="478" width="31.3" height="154.8" fill="#222931" stroke="none" stroke-width="1"/>
<rect x="737" y="478" width="28" height="154.8" fill="#222931" stroke="none" stroke-width="1"/>
<rect x="501" y="499" width="27" height="14" fill="#f0ee00" stroke="none" stroke-width="1"/>
<path d="M504.6 501V511.5M510.6 501V511.5M516.6 501V511.5M522.6 501V511.5" stroke="#2a2a10" stroke-width="1"/>
<rect x="501" y="511.8" width="27" height="1.2" fill="#9a9a20" stroke="none" stroke-width="1"/>
<rect x="501" y="518" width="27" height="14" fill="#f0ee00" stroke="none" stroke-width="1"/>
<path d="M504.6 520V530.5M510.6 520V530.5M516.6 520V530.5M522.6 520V530.5" stroke="#2a2a10" stroke-width="1"/>
<rect x="501" y="530.8" width="27" height="1.2" fill="#9a9a20" stroke="none" stroke-width="1"/>
<rect x="501" y="558" width="27" height="16" fill="#f0ee00" stroke="none" stroke-width="1"/>
<path d="M504.6 560V572.5M510.6 560V572.5M516.6 560V572.5M522.6 560V572.5" stroke="#2a2a10" stroke-width="1"/>
<rect x="501" y="572.8" width="27" height="1.2" fill="#9a9a20" stroke="none" stroke-width="1"/>
<rect x="500" y="592" width="29" height="10" fill="url(#st)" stroke="none" stroke-width="1"/>
<path d="M501 604.6H514M501 607.8H514M501 611.1H514M501 614.3H514M501 617.5H514M501 620.7H514M501 623.9H514M501 627.2H514M501 630.4H514" stroke="#eeee10" stroke-width="1.2"/>
<path d="M501 603V632 M514 603V632" stroke="#eeee10" stroke-width="1.2"/>
<rect x="738" y="499" width="27" height="14" fill="#f0ee00" stroke="none" stroke-width="1"/>
<path d="M741.6 501V511.5M747.6 501V511.5M753.6 501V511.5M759.6 501V511.5" stroke="#2a2a10" stroke-width="1"/>
<rect x="738" y="511.8" width="27" height="1.2" fill="#9a9a20" stroke="none" stroke-width="1"/>
<rect x="738" y="518" width="27" height="14" fill="#f0ee00" stroke="none" stroke-width="1"/>
<path d="M741.6 520V530.5M747.6 520V530.5M753.6 520V530.5M759.6 520V530.5" stroke="#2a2a10" stroke-width="1"/>
<rect x="738" y="530.8" width="27" height="1.2" fill="#9a9a20" stroke="none" stroke-width="1"/>
<rect x="738" y="558" width="27" height="16" fill="#f0ee00" stroke="none" stroke-width="1"/>
<path d="M741.6 560V572.5M747.6 560V572.5M753.6 560V572.5M759.6 560V572.5" stroke="#2a2a10" stroke-width="1"/>
<rect x="738" y="572.8" width="27" height="1.2" fill="#9a9a20" stroke="none" stroke-width="1"/>
<rect x="737" y="592" width="29" height="10" fill="url(#st)" stroke="none" stroke-width="1"/>
<path d="M752 604.6H765M752 607.8H765M752 611.1H765M752 614.3H765M752 617.5H765M752 620.7H765M752 623.9H765M752 627.2H765M752 630.4H765" stroke="#eeee10" stroke-width="1.2"/>
<path d="M752 603V632 M765 603V632" stroke="#eeee10" stroke-width="1.2"/>
<circle cx="515" cy="597" r="3" fill="none" stroke="#e04040" stroke-width="1.2"/>
<circle cx="754" cy="597" r="3" fill="none" stroke="#e04040" stroke-width="1.2"/>
<path d="M503 490 Q515 482 527 490" stroke="#eeee10" stroke-width="1" fill="none"/>
<path d="M740 490 Q751 482 762 490" stroke="#eeee10" stroke-width="1" fill="none"/>
<path d="M514 515 L522 490" stroke="#d8d8d8" stroke-width="0.9" fill="none" stroke-linejoin="miter" />
<path d="M756 510 L763 488" stroke="#d8d8d8" stroke-width="0.9" fill="none" stroke-linejoin="miter" />
<path d="M361.5 514.5H498.6" stroke="#eeee10" stroke-width="1.2"/>
<path d="M361.5 553H498.6" stroke="#eeee10" stroke-width="1.5"/>
<path d="M361.5 590H498.6" stroke="#eeee10" stroke-width="1"/>
<path d="M530 514.5H737" stroke="#eeee10" stroke-width="1.2"/>
<path d="M530 554H737" stroke="#eeee10" stroke-width="1.2"/>
<path d="M530 593H737" stroke="#eeee10" stroke-width="2"/>
<path d="M530 600H737" stroke="#eeee10" stroke-width="0.8"/>
<path d="M530 622H737" stroke="#eeee10" stroke-width="0.8"/>
<path d="M765 514.5H934" stroke="#eeee10" stroke-width="1.2"/>
<path d="M765 554H934" stroke="#eeee10" stroke-width="1.2"/>
<path d="M765 593H934" stroke="#eeee10" stroke-width="2"/>
<path d="M765 600H934" stroke="#eeee10" stroke-width="0.8"/>
<path d="M765 622H934" stroke="#eeee10" stroke-width="0.8"/>
<rect x="358" y="475" width="583" height="5" fill="#7a7a18" stroke="none" stroke-width="1"/>
<path d="M358 475.5H941" stroke="#eeee10" stroke-width="1.1"/>
<path d="M358 480H941" stroke="#eeee10" stroke-width="1.1"/>
<path d="M424 484 L424 477 L448.3 453.5 L472.6 477 L472.6 484Z" fill="url(#st)" stroke="none" stroke-width="1"/>
<path d="M807.3 484 L807.3 477 L841 452 L868 477 L868 484Z" fill="url(#st)" stroke="none" stroke-width="1"/>
<path d="M427 477 L448.3 457 L469.5 477 M811 477 L841 455.5 L865 477" stroke="#eeee10" stroke-width="1" fill="none"/>
<path d="M364 480V594.6" stroke="#c8c818" stroke-width="0.9"/>
<path d="M372 480V594.6" stroke="#c8c818" stroke-width="0.9"/>
<path d="M397 480V594.6" stroke="#c8c818" stroke-width="0.9"/>
<path d="M421 480V594.6" stroke="#c8c818" stroke-width="0.9"/>
<path d="M533 480V632.8" stroke="#c8c818" stroke-width="0.9"/>
<path d="M577 480V632.8" stroke="#c8c818" stroke-width="0.9"/>
<path d="M584 480V632.8" stroke="#c8c818" stroke-width="0.9"/>
<path d="M684 480V632.8" stroke="#c8c818" stroke-width="0.9"/>
<path d="M692 480V632.8" stroke="#c8c818" stroke-width="0.9"/>
<path d="M731 480V632.8" stroke="#c8c818" stroke-width="0.9"/>
<path d="M768 480V632.8" stroke="#c8c818" stroke-width="0.9"/>
<path d="M810 480V632.8" stroke="#c8c818" stroke-width="0.9"/>
<path d="M864 480V632.8" stroke="#c8c818" stroke-width="0.9"/>
<path d="M871 480V632.8" stroke="#c8c818" stroke-width="0.9"/>
<path d="M896 480V632.8" stroke="#c8c818" stroke-width="0.9"/>
<path d="M903 480V632.8" stroke="#c8c818" stroke-width="0.9"/>
<path d="M922 480V632.8" stroke="#c8c818" stroke-width="0.9"/>
<rect x="424" y="553" width="74" height="41" fill="url(#st2)" stroke="none" stroke-width="1"/>
<rect x="424" y="553" width="74" height="41" fill="url(#st3)" stroke="none" stroke-width="1"/>
<rect x="540.6" y="485.3" width="33" height="22.5" fill="#1c2028" stroke="none" stroke-width="1"/>
<g stroke="#1ee61e" stroke-width="2.2" fill="none">
<rect x="541.7" y="486.4" width="30.8" height="20.3"/>
<path d="M550.5 485.3V507.8 M563.7 485.3V507.8 M540.6 489.8H573.6 M540.6 506H573.6 M540.6 495.4H550.5 M563.7 495.4H573.6"/>
<path d="M545.6 489.8V495.4 M568.6 489.8V495.4" stroke-width="1.2"/>
</g>
<rect x="694.4" y="485.3" width="33.7" height="22.5" fill="#1c2028" stroke="none" stroke-width="1"/>
<g stroke="#1ee61e" stroke-width="2.2" fill="none">
<rect x="695.5" y="486.4" width="31.5" height="20.3"/>
<path d="M704.5 485.3V507.8 M718 485.3V507.8 M694.4 489.8H728.1 M694.4 506H728.1 M694.4 495.4H704.5 M718 495.4H728.1"/>
<path d="M699.5 489.8V495.4 M723 489.8V495.4" stroke-width="1.2"/>
</g>
<rect x="780.6" y="485.3" width="25" height="22.5" fill="#1c2028" stroke="none" stroke-width="1"/>
<g stroke="#1ee61e" stroke-width="2.1" fill="none">
<rect x="781.6" y="486.3" width="23" height="20.5"/>
<path d="M793.1 485.3V507.8 M780.6 490.9H805.6 M780.6 497.7H805.6 M785.6 490.9V497.7 M800.6 490.9V497.7"/>
</g>
<rect x="824.7" y="485.3" width="33" height="22.5" fill="#1c2028" stroke="none" stroke-width="1"/>
<g stroke="#1ee61e" stroke-width="2.2" fill="none">
<rect x="825.8" y="486.4" width="30.8" height="20.3"/>
<path d="M834.6 485.3V507.8 M847.8 485.3V507.8 M824.7 489.8H857.7 M824.7 506H857.7 M824.7 495.4H834.6 M847.8 495.4H857.7"/>
<path d="M829.7 489.8V495.4 M852.8 489.8V495.4" stroke-width="1.2"/>
<path d="M824.7 488.3 Q841.2 480.3 857.7 488.3" stroke-width="2"/>
</g>
<rect x="540.6" y="525.2" width="33" height="22.6" fill="#1c2028" stroke="none" stroke-width="1"/>
<g stroke="#1ee61e" stroke-width="2.2" fill="none">
<rect x="541.7" y="526.3" width="30.8" height="20.4"/>
<path d="M550.5 525.2V547.8 M563.7 525.2V547.8 M540.6 529.7H573.6 M540.6 546H573.6 M540.6 535.4H550.5 M563.7 535.4H573.6"/>
<path d="M545.6 529.7V535.4 M568.6 529.7V535.4" stroke-width="1.2"/>
</g>
<rect x="694.4" y="525.2" width="33.7" height="22.6" fill="#1c2028" stroke="none" stroke-width="1"/>
<g stroke="#1ee61e" stroke-width="2.2" fill="none">
<rect x="695.5" y="526.3" width="31.5" height="20.4"/>
<path d="M704.5 525.2V547.8 M718 525.2V547.8 M694.4 529.7H728.1 M694.4 546H728.1 M694.4 535.4H704.5 M718 535.4H728.1"/>
<path d="M699.5 529.7V535.4 M723 529.7V535.4" stroke-width="1.2"/>
</g>
<rect x="780.6" y="525.2" width="25" height="22.6" fill="#1c2028" stroke="none" stroke-width="1"/>
<g stroke="#1ee61e" stroke-width="2.1" fill="none">
<rect x="781.6" y="526.2" width="23" height="20.6"/>
<path d="M793.1 525.2V547.8 M780.6 530.9H805.6 M780.6 537.6H805.6 M785.6 530.9V537.6 M800.6 530.9V537.6"/>
</g>
<rect x="824.7" y="525.2" width="33" height="22.6" fill="#1c2028" stroke="none" stroke-width="1"/>
<g stroke="#1ee61e" stroke-width="2.2" fill="none">
<rect x="825.8" y="526.3" width="30.8" height="20.4"/>
<path d="M834.6 525.2V547.8 M847.8 525.2V547.8 M824.7 529.7H857.7 M824.7 546H857.7 M824.7 535.4H834.6 M847.8 535.4H857.7"/>
<path d="M829.7 529.7V535.4 M852.8 529.7V535.4" stroke-width="1.2"/>
</g>
<rect x="540.6" y="565" width="33" height="22.7" fill="#1c2028" stroke="none" stroke-width="1"/>
<g stroke="#1ee61e" stroke-width="2.2" fill="none">
<rect x="541.7" y="566.1" width="30.8" height="20.5"/>
<path d="M550.5 565V587.7 M563.7 565V587.7 M540.6 569.5H573.6 M540.6 585.9H573.6 M540.6 575.2H550.5 M563.7 575.2H573.6"/>
<path d="M545.6 569.5V575.2 M568.6 569.5V575.2" stroke-width="1.2"/>
</g>
<rect x="694.4" y="565" width="33.7" height="22.7" fill="#1c2028" stroke="none" stroke-width="1"/>
<g stroke="#1ee61e" stroke-width="2.2" fill="none">
<rect x="695.5" y="566.1" width="31.5" height="20.5"/>
<path d="M704.5 565V587.7 M718 565V587.7 M694.4 569.5H728.1 M694.4 585.9H728.1 M694.4 575.2H704.5 M718 575.2H728.1"/>
<path d="M699.5 569.5V575.2 M723 569.5V575.2" stroke-width="1.2"/>
</g>
<rect x="780.6" y="565" width="25" height="22.7" fill="#1c2028" stroke="none" stroke-width="1"/>
<g stroke="#1ee61e" stroke-width="2.1" fill="none">
<rect x="781.6" y="566" width="23" height="20.7"/>
<path d="M793.1 565V587.7 M780.6 570.7H805.6 M780.6 577.5H805.6 M785.6 570.7V577.5 M800.6 570.7V577.5"/>
</g>
<rect x="824.7" y="565" width="33" height="22.7" fill="#1c2028" stroke="none" stroke-width="1"/>
<g stroke="#1ee61e" stroke-width="2.2" fill="none">
<rect x="825.8" y="566.1" width="30.8" height="20.5"/>
<path d="M834.6 565V587.7 M847.8 565V587.7 M824.7 569.5H857.7 M824.7 585.9H857.7 M824.7 575.2H834.6 M847.8 575.2H857.7"/>
<path d="M829.7 569.5V575.2 M852.8 569.5V575.2" stroke-width="1.2"/>
</g>
<rect x="540.6" y="601.6" width="33" height="24.3" fill="#1c2028" stroke="none" stroke-width="1"/>
<g stroke="#1ee61e" stroke-width="2.2" fill="none">
<rect x="541.7" y="602.7" width="30.8" height="22.1"/>
<path d="M550.5 601.6V625.9 M563.7 601.6V625.9 M540.6 606.5H573.6 M540.6 624H573.6 M540.6 612.5H550.5 M563.7 612.5H573.6"/>
<path d="M545.6 606.5V612.5 M568.6 606.5V612.5" stroke-width="1.2"/>
</g>
<rect x="694.4" y="601.6" width="33.7" height="24.3" fill="#1c2028" stroke="none" stroke-width="1"/>
<g stroke="#1ee61e" stroke-width="2.2" fill="none">
<rect x="695.5" y="602.7" width="31.5" height="22.1"/>
<path d="M704.5 601.6V625.9 M718 601.6V625.9 M694.4 606.5H728.1 M694.4 624H728.1 M694.4 612.5H704.5 M718 612.5H728.1"/>
<path d="M699.5 606.5V612.5 M723 606.5V612.5" stroke-width="1.2"/>
</g>
<rect x="780.6" y="601.6" width="25" height="24.3" fill="#1c2028" stroke="none" stroke-width="1"/>
<g stroke="#1ee61e" stroke-width="2.1" fill="none">
<rect x="781.6" y="602.6" width="23" height="22.3"/>
<path d="M793.1 601.6V625.9 M780.6 607.7H805.6 M780.6 615H805.6 M785.6 607.7V615 M800.6 607.7V615"/>
</g>
<rect x="824.7" y="601.6" width="33" height="24.3" fill="#1c2028" stroke="none" stroke-width="1"/>
<g stroke="#1ee61e" stroke-width="2.2" fill="none">
<rect x="825.8" y="602.7" width="30.8" height="22.1"/>
<path d="M834.6 601.6V625.9 M847.8 601.6V625.9 M824.7 606.5H857.7 M824.7 624H857.7 M824.7 612.5H834.6 M847.8 612.5H857.7"/>
<path d="M829.7 606.5V612.5 M852.8 606.5V612.5" stroke-width="1.2"/>
</g>
<rect x="436" y="480" width="24.4" height="27.8" fill="#1c2028" stroke="none" stroke-width="1"/>
<g stroke="#1ee61e" stroke-width="2.1" fill="none">
<rect x="437" y="481" width="22.4" height="25.8"/>
<path d="M448.2 480V507.8 M436 486.9H460.4 M436 495.3H460.4 M440.9 486.9V495.3 M455.5 486.9V495.3"/>
</g>
<rect x="436" y="525" width="24.4" height="21" fill="#1c2028" stroke="none" stroke-width="1"/>
<g stroke="#1ee61e" stroke-width="2.1" fill="none">
<rect x="437" y="526" width="22.4" height="19"/>
<path d="M448.2 525V546 M436 530.2H460.4 M436 536.5H460.4 M440.9 530.2V536.5 M455.5 530.2V536.5"/>
</g>
<rect x="436" y="561.7" width="24.4" height="26" fill="#1c2028" stroke="none" stroke-width="1"/>
<g stroke="#1ee61e" stroke-width="2.1" fill="none">
<rect x="437" y="562.7" width="22.4" height="24"/>
<path d="M448.2 561.7V587.7 M436 568.2H460.4 M436 576H460.4 M440.9 568.2V576 M455.5 568.2V576"/>
</g>
<rect x="586" y="486" width="20" height="12" fill="#1c2028" stroke="none" stroke-width="1"/>
<g stroke="#1ee61e" stroke-width="2" fill="none">
<path d="M587 498V487H605V498 M593 487V498"/>
</g>
<rect x="660" y="486" width="20" height="12" fill="#1c2028" stroke="none" stroke-width="1"/>
<g stroke="#1ee61e" stroke-width="2" fill="none">
<path d="M661 498V487H679V498 M667 487V498"/>
</g>
<rect x="586" y="525.2" width="20" height="12" fill="#1c2028" stroke="none" stroke-width="1"/>
<g stroke="#1ee61e" stroke-width="2" fill="none">
<path d="M587 537.2V526.2H605V537.2 M593 526.2V537.2"/>
</g>
<rect x="660" y="525.2" width="20" height="12" fill="#1c2028" stroke="none" stroke-width="1"/>
<g stroke="#1ee61e" stroke-width="2" fill="none">
<path d="M661 537.2V526.2H679V537.2 M667 526.2V537.2"/>
</g>
<rect x="586" y="565" width="20" height="12" fill="#1c2028" stroke="none" stroke-width="1"/>
<g stroke="#1ee61e" stroke-width="2" fill="none">
<path d="M587 577V566H605V577 M593 566V577"/>
</g>
<rect x="660" y="565" width="20" height="12" fill="#1c2028" stroke="none" stroke-width="1"/>
<g stroke="#1ee61e" stroke-width="2" fill="none">
<path d="M661 577V566H679V577 M667 566V577"/>
</g>
<rect x="586" y="603" width="20" height="14" fill="#1c2028" stroke="none" stroke-width="1"/>
<g stroke="#1ee61e" stroke-width="2" fill="none">
<path d="M587 617V604H605V617 M593 604V617"/>
</g>
<rect x="660" y="603" width="20" height="14" fill="#1c2028" stroke="none" stroke-width="1"/>
<g stroke="#1ee61e" stroke-width="2" fill="none">
<path d="M661 617V604H679V617 M667 604V617"/>
</g>
<rect x="585.8" y="497.4" width="46.8" height="15.6" fill="#f0ee00" stroke="none" stroke-width="1"/>
<path d="M590.3 499.4V511.5M597.8 499.4V511.5M605.3 499.4V511.5M612.8 499.4V511.5M620.3 499.4V511.5M627.8 499.4V511.5" stroke="#2a2a10" stroke-width="1"/>
<rect x="585.8" y="511.8" width="46.8" height="1.2" fill="#9a9a20" stroke="none" stroke-width="1"/>
<rect x="636" y="497.4" width="47" height="15.6" fill="#f0ee00" stroke="none" stroke-width="1"/>
<path d="M640.5 499.4V511.5M648 499.4V511.5M655.5 499.4V511.5M663 499.4V511.5M670.5 499.4V511.5M678 499.4V511.5" stroke="#2a2a10" stroke-width="1"/>
<rect x="636" y="511.8" width="47" height="1.2" fill="#9a9a20" stroke="none" stroke-width="1"/>
<rect x="589" y="537.4" width="42" height="13.9" fill="#f0ee00" stroke="none" stroke-width="1"/>
<path d="M593.5 539.4V549.8M601 539.4V549.8M608.5 539.4V549.8M616 539.4V549.8M623.5 539.4V549.8" stroke="#2a2a10" stroke-width="1"/>
<rect x="589" y="550.1" width="42" height="1.2" fill="#9a9a20" stroke="none" stroke-width="1"/>
<rect x="638" y="537.4" width="40" height="13.9" fill="#f0ee00" stroke="none" stroke-width="1"/>
<path d="M642.5 539.4V549.8M650 539.4V549.8M657.5 539.4V549.8M665 539.4V549.8M672.5 539.4V549.8" stroke="#2a2a10" stroke-width="1"/>
<rect x="638" y="550.1" width="40" height="1.2" fill="#9a9a20" stroke="none" stroke-width="1"/>
<rect x="589" y="577.3" width="42" height="13.9" fill="#f0ee00" stroke="none" stroke-width="1"/>
<path d="M593.5 579.3V589.7M601 579.3V589.7M608.5 579.3V589.7M616 579.3V589.7M623.5 579.3V589.7" stroke="#2a2a10" stroke-width="1"/>
<rect x="589" y="590" width="42" height="1.2" fill="#9a9a20" stroke="none" stroke-width="1"/>
<rect x="638" y="577.3" width="40" height="13.9" fill="#f0ee00" stroke="none" stroke-width="1"/>
<path d="M642.5 579.3V589.7M650 579.3V589.7M657.5 579.3V589.7M665 579.3V589.7M672.5 579.3V589.7" stroke="#2a2a10" stroke-width="1"/>
<rect x="638" y="590" width="40" height="1.2" fill="#9a9a20" stroke="none" stroke-width="1"/>
<rect x="371.9" y="497.4" width="17.3" height="13.9" fill="#f0ee00" stroke="none" stroke-width="1"/>
<path d="M375.5 499.4V509.8M381.5 499.4V509.8" stroke="#2a2a10" stroke-width="1"/>
<rect x="371.9" y="510.1" width="17.3" height="1.2" fill="#9a9a20" stroke="none" stroke-width="1"/>
<rect x="397.9" y="497.4" width="22.6" height="13.9" fill="#f0ee00" stroke="none" stroke-width="1"/>
<path d="M401.5 499.4V509.8M407.5 499.4V509.8M413.5 499.4V509.8" stroke="#2a2a10" stroke-width="1"/>
<rect x="397.9" y="510.1" width="22.6" height="1.2" fill="#9a9a20" stroke="none" stroke-width="1"/>
<rect x="371.9" y="537.4" width="17.3" height="13.9" fill="#f0ee00" stroke="none" stroke-width="1"/>
<path d="M375.5 539.4V549.8M381.5 539.4V549.8" stroke="#2a2a10" stroke-width="1"/>
<rect x="371.9" y="550.1" width="17.3" height="1.2" fill="#9a9a20" stroke="none" stroke-width="1"/>
<rect x="397.9" y="537.4" width="22.6" height="13.9" fill="#f0ee00" stroke="none" stroke-width="1"/>
<path d="M401.5 539.4V549.8M407.5 539.4V549.8M413.5 539.4V549.8" stroke="#2a2a10" stroke-width="1"/>
<rect x="397.9" y="550.1" width="22.6" height="1.2" fill="#9a9a20" stroke="none" stroke-width="1"/>
<rect x="869.8" y="497.4" width="26" height="13.9" fill="#f0ee00" stroke="none" stroke-width="1"/>
<path d="M873.4 499.4V509.8M879.4 499.4V509.8M885.4 499.4V509.8M891.4 499.4V509.8" stroke="#2a2a10" stroke-width="1"/>
<rect x="869.8" y="510.1" width="26" height="1.2" fill="#9a9a20" stroke="none" stroke-width="1"/>
<rect x="902.8" y="497.4" width="19.1" height="13.9" fill="#f0ee00" stroke="none" stroke-width="1"/>
<path d="M906.4 499.4V509.8M912.4 499.4V509.8M918.4 499.4V509.8" stroke="#2a2a10" stroke-width="1"/>
<rect x="902.8" y="510.1" width="19.1" height="1.2" fill="#9a9a20" stroke="none" stroke-width="1"/>
<rect x="869.8" y="537.4" width="26" height="13.9" fill="#f0ee00" stroke="none" stroke-width="1"/>
<path d="M873.4 539.4V549.8M879.4 539.4V549.8M885.4 539.4V549.8M891.4 539.4V549.8" stroke="#2a2a10" stroke-width="1"/>
<rect x="869.8" y="550.1" width="26" height="1.2" fill="#9a9a20" stroke="none" stroke-width="1"/>
<rect x="902.8" y="537.4" width="19.1" height="13.9" fill="#f0ee00" stroke="none" stroke-width="1"/>
<path d="M906.4 539.4V549.8M912.4 539.4V549.8M918.4 539.4V549.8" stroke="#2a2a10" stroke-width="1"/>
<rect x="902.8" y="550.1" width="19.1" height="1.2" fill="#9a9a20" stroke="none" stroke-width="1"/>
<rect x="869.8" y="577.3" width="26" height="13.9" fill="#f0ee00" stroke="none" stroke-width="1"/>
<path d="M873.4 579.3V589.7M879.4 579.3V589.7M885.4 579.3V589.7M891.4 579.3V589.7" stroke="#2a2a10" stroke-width="1"/>
<rect x="869.8" y="590" width="26" height="1.2" fill="#9a9a20" stroke="none" stroke-width="1"/>
<rect x="902.8" y="577.3" width="19.1" height="13.9" fill="#f0ee00" stroke="none" stroke-width="1"/>
<path d="M906.4 579.3V589.7M912.4 579.3V589.7M918.4 579.3V589.7" stroke="#2a2a10" stroke-width="1"/>
<rect x="902.8" y="590" width="19.1" height="1.2" fill="#9a9a20" stroke="none" stroke-width="1"/>
<rect x="407" y="483" width="4.5" height="14" fill="#1c2028" stroke="none" stroke-width="1"/>
<path d="M407.5 483V497" stroke="#1ee61e" stroke-width="1.4"/>
<path d="M410.8 483V497" stroke="#1ee61e" stroke-width="1.4"/>
<rect x="407" y="518" width="4.5" height="19" fill="#1c2028" stroke="none" stroke-width="1"/>
<path d="M407.5 518V537" stroke="#1ee61e" stroke-width="1.4"/>
<path d="M410.8 518V537" stroke="#1ee61e" stroke-width="1.4"/>
<rect x="407" y="556" width="4.5" height="34" fill="#1c2028" stroke="none" stroke-width="1"/>
<path d="M407.5 556V590" stroke="#1ee61e" stroke-width="1.4"/>
<path d="M410.8 556V590" stroke="#1ee61e" stroke-width="1.4"/>
<rect x="884" y="483" width="4.5" height="14" fill="#1c2028" stroke="none" stroke-width="1"/>
<path d="M884.5 483V497" stroke="#1ee61e" stroke-width="1.4"/>
<path d="M887.8 483V497" stroke="#1ee61e" stroke-width="1.4"/>
<rect x="884" y="518" width="4.5" height="19" fill="#1c2028" stroke="none" stroke-width="1"/>
<path d="M884.5 518V537" stroke="#1ee61e" stroke-width="1.4"/>
<path d="M887.8 518V537" stroke="#1ee61e" stroke-width="1.4"/>
<rect x="884" y="556" width="4.5" height="21" fill="#1c2028" stroke="none" stroke-width="1"/>
<path d="M884.5 556V577" stroke="#1ee61e" stroke-width="1.4"/>
<path d="M887.8 556V577" stroke="#1ee61e" stroke-width="1.4"/>
<rect x="873" y="602" width="16" height="30" fill="#1c2028" stroke="#1ee61e" stroke-width="1.8"/>
<path d="M881 602V632" stroke="#1ee61e" stroke-width="1.4"/>
<rect x="936" y="565" width="12" height="21" fill="#1c2028" stroke="none" stroke-width="1"/>
<g stroke="#1ee61e" stroke-width="2" fill="none">
<path d="M937 586V566H947V586 M940.2 566V586"/>
</g>
<path d="M866 512 q8 -6 16 0 q8 -6 16 0 q8 -6 16 0 q8 0 10 8 q0 8 -8 10 q-8 6 -16 0 q-8 6 -16 0 q-8 6 -16 0 q-8 0 -8 -9 q0 -8 6 -9Z" stroke="#d8d8d8" stroke-width="1" fill="none" stroke-dasharray="3 2"/>
<path d="M361.5 478V594.6" stroke="#1515c8" stroke-width="2.2"/>
<path d="M424 476V594.6" stroke="#1515c8" stroke-width="2.2"/>
<path d="M472.6 476V594.6" stroke="#1515c8" stroke-width="2.2"/>
<path d="M498.6 478V632.8" stroke="#1515c8" stroke-width="2.2"/>
<path d="M529.9 478V632.8" stroke="#1515c8" stroke-width="2.2"/>
<path d="M813 476V632.8" stroke="#1515c8" stroke-width="2.2"/>
<path d="M868 476V632.8" stroke="#1515c8" stroke-width="2.2"/>
<path d="M923.6 476V632.8" stroke="#1515c8" stroke-width="2.2"/>
<path d="M934 546V632.8" stroke="#1515c8" stroke-width="2.2"/>
<path d="M949.7 546V632.8" stroke="#1515c8" stroke-width="2.2"/>
<path d="M934 546H950" stroke="#1515c8" stroke-width="2.2"/>
<path d="M328.5 594.6H498.6" stroke="#1515c8" stroke-width="2.2"/>
<path d="M498.6 632.8H979" stroke="#1515c8" stroke-width="2.2"/>
<path d="M498 592H530" stroke="#1515c8" stroke-width="2"/>
<path d="M737 592H765" stroke="#eeee10" stroke-width="1.5"/>
<path d="M737 478V632.8" stroke="#eeee10" stroke-width="1.2"/>
<path d="M765 478V632.8" stroke="#eeee10" stroke-width="1.2"/>
<g stroke="#eeee10" stroke-width="1.5" fill="none">
<path d="M382.3 454V406.6Q390.2 400.6 398 406.6V454"/>
<path d="M384.8 454V410.6 M395.5 454V410.6 M382.3 407.6H398 M382.3 410.6H398"/>
</g>
<g stroke="#eeee10" stroke-width="1.5" fill="none">
<path d="M858.7 440V409.4Q863.4 403.4 868 409.4V440"/>
<path d="M861.2 440V413.4 M865.5 440V413.4 M858.7 410.4H868 M858.7 413.4H868"/>
</g>
<path d="M358 476.6 L430.9 420 L503.8 474.9" stroke="#1515c8" stroke-width="2.4" fill="none" stroke-linejoin="miter" />
<path d="M382 450.6 L352.8 450.6 L352.8 476.6 L362 476.6" stroke="#1515c8" stroke-width="2.4" fill="none" stroke-linejoin="miter" />
<path d="M457 439.4 L584 439.4" stroke="#1515c8" stroke-width="1.6" fill="none" stroke-linejoin="miter" />
<path d="M418.8 478.3 L448.3 452.3 L477.8 478.3" stroke="#1515c8" stroke-width="2.4" fill="none" stroke-linejoin="miter" />
<path d="M526.7 471.4 L582.3 428.7 L684.7 428.7 L698.6 433.2 L723 433.2 L729.9 436.7 L812.5 436.7" stroke="#1515c8" stroke-width="2.2" fill="none" stroke-linejoin="miter" />
<path d="M764 474.9 L847.2 412.4 L858 420" stroke="#1515c8" stroke-width="2.4" fill="none" stroke-linejoin="miter" />
<path d="M849 450.6 L883 425.6 L932.3 461" stroke="#1515c8" stroke-width="2.4" fill="none" stroke-linejoin="miter" />
<path d="M930.6 451.6 L941.7 451.6 L941.7 476.6 L934 476.6" stroke="#1515c8" stroke-width="2.4" fill="none" stroke-linejoin="miter" />
<path d="M807.3 476.6 L841 450.6 L873.3 476.6" stroke="#1515c8" stroke-width="2.4" fill="none" stroke-linejoin="miter" />
<rect x="415" y="475" width="6" height="3" fill="#1515c8" stroke="none" stroke-width="1"/>
<rect x="475" y="475" width="6" height="3" fill="#1515c8" stroke="none" stroke-width="1"/>
<rect x="501" y="475" width="6" height="3" fill="#1515c8" stroke="none" stroke-width="1"/>
<rect x="524" y="475" width="6" height="3" fill="#1515c8" stroke="none" stroke-width="1"/>
<rect x="761" y="475" width="6" height="3" fill="#1515c8" stroke="none" stroke-width="1"/>
<rect x="805" y="475" width="6" height="3" fill="#1515c8" stroke="none" stroke-width="1"/>
<rect x="870" y="475" width="6" height="3" fill="#1515c8" stroke="none" stroke-width="1"/>
<g stroke="#eeee10" stroke-width="1.1" fill="none">
<path d="M577 474.9 L634.4 431.5 L691.7 474.9 M861 461 L883 428 L904.5 461 M387.5 476.6 L408 436.7"/>
<path d="M856 461H935 M856 465H935 M856 469H935"/>
<path d="M430 478 L448.3 458 L467 478 M818 477 L841 457 L862 477"/>
</g>
<circle cx="840.3" cy="466.2" r="4.8" fill="#1ee61e"/><circle cx="840.3" cy="466.2" r="7" fill="none" stroke="#1ee61e" stroke-width="1"/>
<g stroke="#eeee10" stroke-width="1.5" fill="none">
<path d="M577 461V439Q581.4 433 585.8 439V461Z"/>
<path d="M577 441H585.8 M577 443.5H585.8"/>
<rect x="579.5" y="445" width="3.8" height="13.5"/>
</g>
<g stroke="#eeee10" stroke-width="1.5" fill="none">
<path d="M681 461V439Q686 433 691 439V461Z"/>
<path d="M681 441H691 M681 443.5H691"/>
<rect x="683.5" y="445" width="5" height="13.5"/>
</g>
<path d="M660 448 L680 448 L680 458" stroke="#d8d8d8" stroke-width="0.9" fill="none"/>
<text x="670" y="445" fill="#e0e0e0" font-size="4" font-family="Liberation Sans" font-weight="bold">12</text>
<text x="663" y="455" fill="#e0e0e0" font-size="4" font-family="Liberation Sans" font-weight="bold">TYP</text>
<path d="M955 468 L963.5 461 L963.5 464.9 L970.5 464.9 L970.5 471.5 L963.5 471.5 L963.5 475Z" fill="none" stroke="#e8e8e8" stroke-width="1.3"/>
<rect x="963.5" y="466.6" width="2.5" height="3" fill="#d8d8d8"/>
<path d="M934 517.3 L942.6 509.6 L942.6 513.9 L949.7 513.9 L949.7 521.1 L942.6 521.1 L942.6 525Z" fill="none" stroke="#e8e8e8" stroke-width="1.3"/>
<rect x="942.6" y="515.8" width="2.5" height="3" fill="#d8d8d8"/>
<path transform="translate(379.5 624.5) rotate(135)" d="M-8 0L-1 -7V-3.5H8V3.5H-1V7Z" fill="none" stroke="#e8e8e8" stroke-width="1.3"/>
<path transform="translate(883.5 659.5) rotate(45)" d="M-8 0L-1 -7V-3.5H8V3.5H-1V7Z" fill="none" stroke="#e8e8e8" stroke-width="1.3"/>
<g stroke="#d8d8d8" stroke-width="0.9" fill="none"><path d="M468 604 L478 580 M470 618 L484 580 M474 632 L490 580"/></g>
<text x="422" y="607" fill="#e0e0e0" font-size="4" font-family="Liberation Sans" font-weight="bold">24"X24" ACCESS</text>
<text x="422" y="611.5" fill="#e0e0e0" font-size="4" font-family="Liberation Sans" font-weight="bold">PANEL</text>
<path d="M446 606H470" stroke="#d8d8d8" stroke-width="0.8"/>
<text x="422" y="618.5" fill="#e0e0e0" font-size="4" font-family="Liberation Sans" font-weight="bold">SLOPE OF ROOF</text>
<text x="422" y="623" fill="#e0e0e0" font-size="4" font-family="Liberation Sans" font-weight="bold">BEYOND</text>
<path d="M446 617.5H473" stroke="#d8d8d8" stroke-width="0.8"/>
<text x="422" y="630" fill="#e0e0e0" font-size="4" font-family="Liberation Sans" font-weight="bold">SCUPPER AND</text>
<text x="422" y="634.5" fill="#e0e0e0" font-size="4" font-family="Liberation Sans" font-weight="bold">DOWNSPOUT</text>
<path d="M446 629H476" stroke="#d8d8d8" stroke-width="0.8"/>
<path d="M657 633V660" stroke="#e0e0e0" stroke-width="1.2"/>
<text x="400" y="664" fill="#e0e0e0" font-size="4.5" font-family="Liberation Sans" font-weight="bold">FL</text>
<text x="600" y="664" fill="#e0e0e0" font-size="4.5" font-family="Liberation Sans" font-weight="bold">C</text>
<text x="708" y="664" fill="#e0e0e0" font-size="4.5" font-family="Liberation Sans" font-weight="bold">D</text>
<text x="836" y="664" fill="#e0e0e0" font-size="4.5" font-family="Liberation Sans" font-weight="bold">F/10</text>
<g stroke="#e8e8e8" stroke-width="1.3" fill="none">
<path d="M70.5 593V651H130 M65 646H76V657H65Z"/>
<path d="M70 571L76 578L82 571 M76 578V585"/>
<path d="M138 639L150 651 M150 639L138 651"/>
</g>
</g></svg>
<div id="cbot" class="abs"></div>
<div id="tabbar" class="abs"></div>
<div id="status" class="abs">
  <div class="row" style="left:2px;top:4px;font-family:'Liberation Sans',sans-serif;letter-spacing:0.55px;font-size:10px;white-space:pre">60&#8242;-6&#8243;,  178&#8242;-3/4&#8243;,  0&#8243;</div>
  <div class="row" style="left:1135px;top:5px">DWG FastView</div>
</div>


<svg class="abs" style="left:0;top:0" width="1280" height="720">
<defs>
<radialGradient id="lg" cx="0.45" cy="0.4" r="0.6"><stop offset="0" stop-color="#ffffff"/><stop offset="0.7" stop-color="#e8ecef"/><stop offset="1" stop-color="#a8b0b8"/></radialGradient>
<linearGradient id="fold" x1="0" y1="0" x2="0" y2="1"><stop offset="0" stop-color="#f4f6fc"/><stop offset="1" stop-color="#6f8fd8"/></linearGradient>
<linearGradient id="sav" x1="0" y1="0" x2="1" y2="1"><stop offset="0" stop-color="#a8bcec"/><stop offset="1" stop-color="#4a6cc8"/></linearGradient>
<linearGradient id="grip" x1="0" y1="0" x2="1" y2="0"><stop offset="0" stop-color="#7a9ae0"/><stop offset="1" stop-color="#5a7ad0"/></linearGradient>
</defs>
<!-- logo -->
<circle cx="58.5" cy="17.7" r="14.3" fill="url(#lg)" stroke="#b8bcc0" stroke-width="1"/>
<path d="M67.5 9.5H54.5Q49.5 9.5 49 14V22Q49 27.2 54 27.2H66.5L67.5 19.5H59.5L58.6 22H54.4V14.5H66Z" fill="#3a8a3a"/>
<path d="M51 12L56 10H66L65 13H55L52 15Z" fill="#1f6a22"/>
<path d="M54.3 17.5H60.5V21.6H54.3Z" fill="#f4f4f4"/>
<circle cx="64" cy="20.3" r="2.6" fill="#ee8a30"/>
<!-- title small arrow -->
<path d="M82.5 8.5H88.5" stroke="#1a2450" stroke-width="1.3"/><path d="M82.8 10.5L85.5 13.8L88.2 10.5Z" fill="#1a2450"/><path d="M82.5 9.6H88.5" stroke="#8ab0f0" stroke-width="0.6"/>
<!-- toolbar1 gripper -->
<rect x="40" y="42.5" width="8" height="31.5" fill="url(#grip)"/>
<g fill="#dfe8fa">
<rect x="43" y="46" width="2" height="1"/><rect x="43" y="49" width="2" height="1"/><rect x="43" y="52" width="2" height="1"/><rect x="43" y="55" width="2" height="1"/><rect x="43" y="58" width="2" height="1"/><rect x="43" y="61" width="2" height="1"/><rect x="43" y="64" width="2" height="1"/><rect x="43" y="67" width="2" height="1"/><rect x="43" y="70" width="2" height="1"/>
</g>
<!-- folder icon -->
<path d="M53 69.5V53.5Q53 51 55.5 51H60L62.5 53.5H71.5Q73 53.5 73 55V57" fill="#f3f5fb" stroke="#4a5a8a" stroke-width="1.2"/>
<path d="M53 69.5L58 58.5H78L73 69.5Z" fill="url(#fold)" stroke="#3a4a8a" stroke-width="1.3"/>
<!-- save icon -->
<rect x="86" y="45.5" width="23.5" height="24.5" rx="2.5" fill="url(#sav)" stroke="#2a3f8a" stroke-width="1.2"/>
<rect x="89.5" y="46.5" width="16" height="11" fill="#eef2fa"/>
<path d="M92 49.5H103M92 52.5H103" stroke="#6a88d0" stroke-width="1.2"/>
<rect x="90.5" y="61" width="12" height="9" fill="#eef2fa"/>
<rect x="92.5" y="62.5" width="4" height="6.5" fill="#3a58b0"/>
<path d="M97 70L110 56" stroke="#7a5a20" stroke-width="4.6" stroke-linecap="butt"/>
<path d="M97 70L110 56" stroke="#f0d050" stroke-width="3"/>
<path d="M95.5 71.5L98 69" stroke="#fff" stroke-width="2.5"/>
<!-- toolbar end arrow -->
<path d="M392.5 57L398.5 57L395.5 60.5Z" fill="#8a8a98"/>
<!-- toolbar2 -->
<rect x="401.8" y="42.7" width="9.8" height="31" fill="url(#grip)"/>
<g fill="#dfe8fa">
<rect x="405.5" y="46" width="2" height="1"/><rect x="405.5" y="49" width="2" height="1"/><rect x="405.5" y="52" width="2" height="1"/><rect x="405.5" y="55" width="2" height="1"/><rect x="405.5" y="58" width="2" height="1"/><rect x="405.5" y="61" width="2" height="1"/><rect x="405.5" y="64" width="2" height="1"/><rect x="405.5" y="67" width="2" height="1"/><rect x="405.5" y="70" width="2" height="1"/>
</g>
<path d="M414.5 44V73" stroke="#b0b8c4" stroke-width="0.8"/>
<rect x="412.8" y="49.4" width="246.8" height="17.2" fill="#fff" stroke="#7c8a9c" stroke-width="1.2"/>
<rect x="646.2" y="51" width="11.5" height="14" fill="#c4d2f4"/>
<path d="M649 56L652 59.5L655 56" stroke="#24344e" stroke-width="1.8" fill="none"/>
<!-- bulb -->
<circle cx="422.8" cy="56.5" r="3.8" fill="#fbe8b0" stroke="#e0b860" stroke-width="1"/>
<rect x="421" y="60" width="3.6" height="3.5" fill="#5a6070"/>
<!-- sun -->
<circle cx="436" cy="57.8" r="3.3" fill="#f0d838" stroke="#222" stroke-width="1"/>
<path d="M436 51.5V53M436 62.5V64M429.8 57.8H431.3M440.7 57.8H442.2M431.6 53.4L432.8 54.6M439.2 61L440.4 62.2M440.4 53.4L439.2 54.6M432.8 61L431.6 62.2" stroke="#222" stroke-width="0.9"/>
<!-- lock -->
<path d="M449 56V53Q449 51 452 51Q455 51 455 53.5V56" stroke="#4a6aa8" stroke-width="2" fill="none"/>
<rect x="443.5" y="56.5" width="9.5" height="7.5" fill="#a8b8e8" stroke="#1a2a5a" stroke-width="1.1"/>
<!-- square -->
<rect x="458.5" y="53.3" width="9.2" height="9.2" fill="#fff" stroke="#000" stroke-width="1.3"/>
<text x="470" y="62.3" font-family="Liberation Sans" font-size="10" fill="#333">0</text>
<!-- tabbar items -->
<g fill="#000">
<path d="M47.5 685.5V692M49 688.7L53.5 685.5V692Z" stroke="#000" stroke-width="1"/>
<path d="M67.5 685.5L63 688.7L67.5 692Z"/>
<path d="M80.5 685.5L85 688.7L80.5 692Z"/>
<path d="M93.5 685.5L98 688.7L93.5 692ZM99.5 685.5V692" stroke="#000" stroke-width="1"/>
</g>
<path d="M150 681.5L154 694H197L203 681.5" fill="#ece9d8" stroke="#222" stroke-width="1.1"/>
<path d="M105 681.5L112.4 694H145L150.5 681.5Z" fill="#fff" stroke="#222" stroke-width="1.1"/>
<path d="M105 681.5H203" stroke="#111" stroke-width="2"/>
<!-- status icons -->
<circle cx="266" cy="709" r="4" fill="#f4d8c8" stroke="#d05040" stroke-width="1.2"/>
<path d="M268.5 712L271.5 715.5" stroke="#3a5aa0" stroke-width="2.2"/>
<rect x="278" y="704" width="12" height="12" fill="#fff" stroke="#3a5aa0" stroke-width="1.2"/>
<rect x="278" y="704" width="12" height="3" fill="#4a70c0"/>
</svg>

<!-- View menu -->
<div class="abs menu" style="left:110px;top:40px;width:170px;height:95px;">
  <div class="abs" style="left:1px;top:2px;width:167px;height:15px;background:#316ac5"></div>
  <div class="row" style="left:20px;top:4px;color:#fff"><u>Z</u>oom</div>
  <div class="arr" style="left:162px;top:6px;border-left-color:#fff"></div>
  <div class="row" style="left:20px;top:21px"><u>P</u>an</div>
  <div class="arr" style="left:162px;top:23px"></div>
  <div class="row" style="left:20px;top:38px"><u>C</u>lean Screen</div>
  <div class="row" style="left:134px;top:38px">CTRL+O</div>
  <div class="sep" style="left:3px;top:54px;width:164px"></div>
  <div class="row" style="left:20px;top:62px">Toolbar Icon</div>
  <div class="arr" style="left:162px;top:64px"></div>
  <div class="row" style="left:20px;top:79px">Toolbars...</div>
</div>
<!-- Zoom submenu -->
<div class="abs menu" style="left:279px;top:40px;width:106px;height:210px;">
  <div class="row" style="left:21px;top:5px"><u>R</u>ealtime</div>
  <div class="sep" style="left:3px;top:21px;width:100px"></div>
  <div class="row" style="left:21px;top:29px"><u>P</u>revious</div>
  <div class="row" style="left:21px;top:46px"><u>W</u>indow</div>
  <div class="row" style="left:21px;top:62px"><u>D</u>ynamic</div>
  <div class="row" style="left:21px;top:79px"><u>S</u>cale</div>
  <div class="row" style="left:21px;top:95px"><u>C</u>enter</div>
  <div class="row" style="left:21px;top:112px">Object</div>
  <div class="sep" style="left:3px;top:128px;width:100px"></div>
  <div class="row" style="left:21px;top:136px"><u>I</u>n</div>
  <div class="row" style="left:21px;top:153px"><u>O</u>ut</div>
  <div class="sep" style="left:3px;top:168px;width:100px"></div>
  <div class="row" style="left:21px;top:177px"><u>A</u>ll</div>
  <div class="row" style="left:21px;top:193px"><u>E</u>xtents</div>
</div>
<div class="row abs" style="left:113px;top:683px;font-weight:bold;letter-spacing:-0.9px">Model</div>
<div class="row abs" style="left:156px;top:683px;letter-spacing:-0.9px">Layout1</div>
<svg class="abs" style="left:0;top:0" width="400" height="260">
<g transform="translate(288.5 48.7)"><path d="M3.8 3.8L7.6 7.6" stroke="#3a52a8" stroke-width="2.5" stroke-linecap="round"/><circle r="5" fill="#e6ecfa" stroke="#5b70c0" stroke-width="1.4"/><path d="M-2.6 -1Q0 -3.4 2.6 -1M-1.5 0.6Q0 -0.8 1.5 0.6" stroke="#4a5eb0" stroke-width="1" fill="none"/><circle cx="0" cy="2" r="0.9" fill="#4a5eb0"/></g>
<g transform="translate(288.5 72.4)"><path d="M3.8 3.8L7.6 7.6" stroke="#3a52a8" stroke-width="2.5" stroke-linecap="round"/><circle r="5" fill="#e6ecfa" stroke="#5b70c0" stroke-width="1.4"/><path d="M2 2L-1.5 -1.5M-2.5 -2.5L-2.5 0M-2.5 -2.5L0 -2.5" stroke="#24348a" stroke-width="1.5" fill="none"/></g>
<g transform="translate(288.5 89.2)"><path d="M3.8 3.8L7.6 7.6" stroke="#3a52a8" stroke-width="2.5" stroke-linecap="round"/><circle r="5" fill="#e6ecfa" stroke="#5b70c0" stroke-width="1.4"/><rect x="-2.6" y="-2.6" width="5.2" height="5.2" fill="#e8eefc" stroke="#5a6eb8" stroke-width="1"/></g>
<g transform="translate(288.5 105.2)"><path d="M3.8 3.8L7.6 7.6" stroke="#3a52a8" stroke-width="2.5" stroke-linecap="round"/><circle r="5" fill="#e6ecfa" stroke="#5b70c0" stroke-width="1.4"/><path d="M-2.5 -2.5V2.5M-1 -2.5V2.5M0.5 -1.8L3 0L0.5 1.8Z" stroke="#4a5eb0" stroke-width="0.9" fill="#4a5eb0"/></g>
<g transform="translate(288.5 122.0)"><path d="M3.8 3.8L7.6 7.6" stroke="#3a52a8" stroke-width="2.5" stroke-linecap="round"/><circle r="5" fill="#e6ecfa" stroke="#5b70c0" stroke-width="1.4"/><path d="M-2.5 -2L-0.5 0M-0.5 -2L-2.5 0M0.5 0L2.5 2M2.5 0L0.5 2" stroke="#4a5eb0" stroke-width="0.9"/></g>
<g transform="translate(288.5 138.4)"><path d="M3.8 3.8L7.6 7.6" stroke="#3a52a8" stroke-width="2.5" stroke-linecap="round"/><circle r="5" fill="#e6ecfa" stroke="#5b70c0" stroke-width="1.4"/><path d="M0 -2.8V2.8M-2.8 0H2.8M-2 -2L2 2M2 -2L-2 2" stroke="#5a6eb8" stroke-width="0.8"/></g>
<g transform="translate(288.5 155.7)"><path d="M3.8 3.8L7.6 7.6" stroke="#3a52a8" stroke-width="2.5" stroke-linecap="round"/><circle r="5" fill="#e6ecfa" stroke="#5b70c0" stroke-width="1.4"/><path d="M0 -3L0.9 -0.9L3 -0.9L1.3 0.5L2 2.8L0 1.4L-2 2.8L-1.3 0.5L-3 -0.9L-0.9 -0.9Z" fill="#24348a"/></g>
<g transform="translate(288.5 179.9)"><path d="M3.8 3.8L7.6 7.6" stroke="#3a52a8" stroke-width="2.5" stroke-linecap="round"/><circle r="5" fill="#e6ecfa" stroke="#5b70c0" stroke-width="1.4"/><path d="M0 -2.8V2.8M-2.8 0H2.8" stroke="#3a4ea8" stroke-width="1.5"/></g>
<g transform="translate(288.5 196.1)"><path d="M3.8 3.8L7.6 7.6" stroke="#3a52a8" stroke-width="2.5" stroke-linecap="round"/><circle r="5" fill="#e6ecfa" stroke="#5b70c0" stroke-width="1.4"/><path d="M-2.8 0H2.8" stroke="#3a4ea8" stroke-width="1.5"/></g>
<g transform="translate(288.5 219.9)"><path d="M3.8 3.8L7.6 7.6" stroke="#3a52a8" stroke-width="2.5" stroke-linecap="round"/><circle r="5" fill="#e6ecfa" stroke="#5b70c0" stroke-width="1.4"/><path d="M-2 -3H1L2.5 -1.5V3H-2Z" fill="#fff" stroke="#4a5eb0" stroke-width="0.9"/></g>
<g transform="translate(288.5 237.1)"><path d="M3.8 3.8L7.6 7.6" stroke="#3a52a8" stroke-width="2.5" stroke-linecap="round"/><circle r="5" fill="#e6ecfa" stroke="#5b70c0" stroke-width="1.4"/><path d="M0 -3V3M-3 0H3M-2.1 -2.1L2.1 2.1M2.1 -2.1L-2.1 2.1" stroke="#4a5eb0" stroke-width="0.9"/><circle r="1" fill="#fff"/></g>
<g stroke="#1a3a8a" stroke-width="2" fill="#1a3a8a"><path d="M115 79L118.5 82.5M125 79L121.5 82.5M115 89L118.5 85.5M125 89L121.5 85.5" /></g>
<path d="M114.5 78.5H118L114.5 82ZM125.5 78.5H122L125.5 82ZM114.5 89.5H118L114.5 86ZM125.5 89.5H122L125.5 86Z" fill="#1a3a8a"/>
<g fill="none" stroke="#3a5ab0" stroke-width="1.3"><path d="M114.5 120V125.5H117M117 121.5H126.5M117 121.5V129.5H126.5M119.5 124V127H126"/></g>
</svg>
</body></html>
